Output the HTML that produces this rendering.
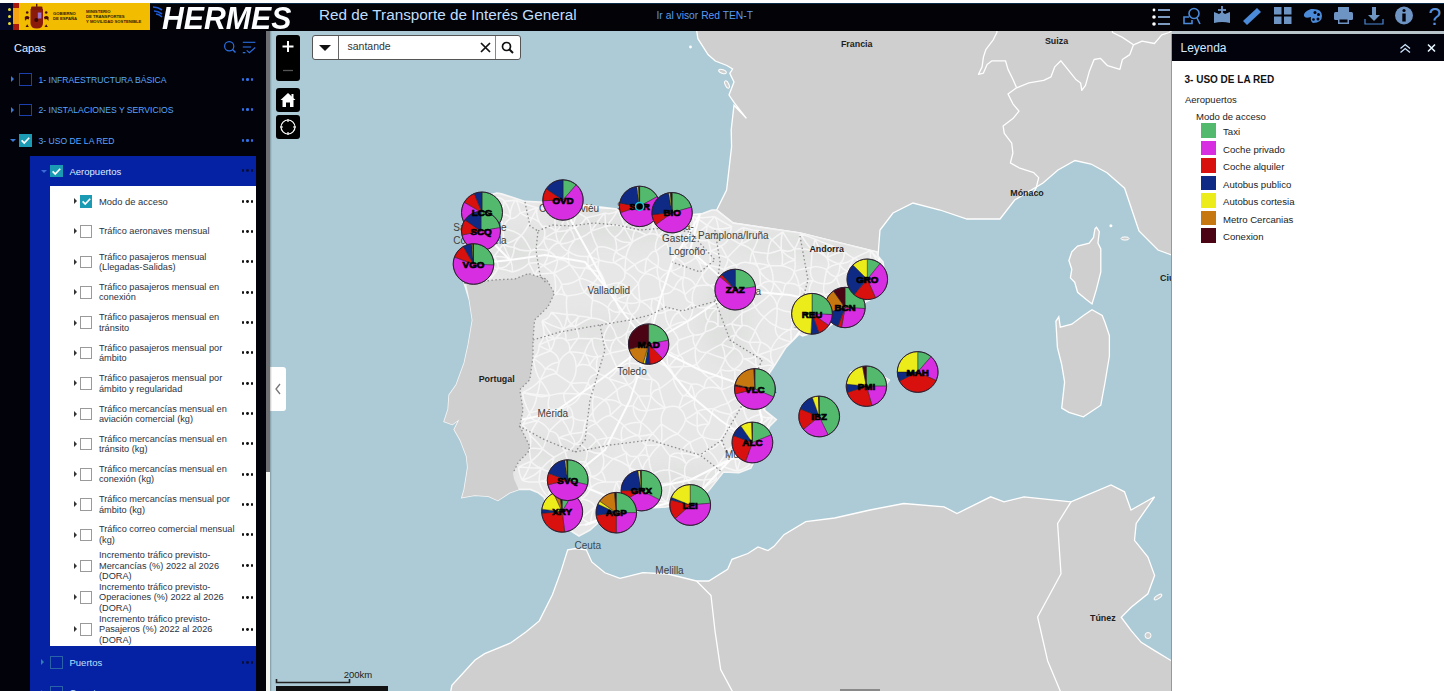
<!DOCTYPE html>
<html><head><meta charset="utf-8">
<style>
*{margin:0;padding:0;box-sizing:border-box}
html,body{width:1444px;height:691px;overflow:hidden;background:#fff;font-family:"Liberation Sans",sans-serif}
#top{position:absolute;left:0;top:0;width:1444px;height:3px;background:#fdfdfd}
#hdr{position:absolute;left:0;top:3px;width:1444px;height:28px;background:#020207}
#side{position:absolute;left:0;top:31px;width:266px;height:660px;background:#02030a;overflow:hidden}
#sb{position:absolute;left:266px;top:31px;width:4px;height:660px;background:#f4f4f0}
#sbt{position:absolute;left:266px;top:31px;width:4px;height:441px;background:#6d6f72}
#map{position:absolute;left:270px;top:31px;width:902px;height:660px;overflow:hidden;background:#adcbd6}
#leg{position:absolute;left:1172px;top:34px;width:272px;height:657px;background:#fff;border-left:1px solid #9aa}
.abs{position:absolute}
.t{position:absolute;white-space:nowrap}
</style></head><body>
<div id="top"></div>
<div id="hdr">
 <div class="abs" style="left:0;top:0;width:1444px;height:1px;background:#0b2a48"></div>
 <div class="abs" style="left:0;top:0;width:13px;height:27px;background:#050a2a"></div>
 <div class="abs" style="left:8px;top:5px;width:3px;height:3px;border-radius:50%;background:#e8e030"></div>
 <div class="abs" style="left:8px;top:12px;width:3px;height:3px;border-radius:50%;background:#e8e030"></div>
 <div class="abs" style="left:8px;top:19px;width:3px;height:3px;border-radius:50%;background:#e8e030"></div>
 <div class="abs" style="left:13px;top:0;width:137px;height:27px;background:#f2bd00"></div>
 <div class="abs" style="left:13px;top:0;width:6px;height:4.5px;background:#a8180c"></div>
 <div class="abs" style="left:13px;top:21px;width:6px;height:6px;background:#a8180c"></div>
 <div class="abs" style="left:13px;top:4.5px;width:6px;height:16.5px;background:#f4a412"></div>
 <svg class="abs" style="left:0;top:-3px" width="150" height="34" viewBox="0 0 150 34">
  <path d="M30.5 9 L43 9 L43 23 Q43 28.5 36.7 28.5 Q30.5 28.5 30.5 23 Z" fill="#8a1a0a"/>
  <rect x="31" y="6.5" width="11.5" height="3.5" rx="1.2" fill="#7a1608"/>
  <rect x="36" y="3.8" width="1.4" height="3" fill="#5a1005"/>
  <rect x="37.8" y="12.5" width="3.6" height="6" fill="#9c72c4"/>
  <circle cx="36.3" cy="20" r="2" fill="#3a0800"/>
  <g fill="#4a0c04">
   <circle cx="27.2" cy="12.5" r="1.3"/><circle cx="46.2" cy="12.5" r="1.3"/>
   <path d="M24.8 17 Q27 15 29.5 17.2 L28.6 19.5 Q26.5 18 25 21 Z"/>
   <path d="M48.6 17 Q46.4 15 43.9 17.2 L44.8 19.5 Q46.9 18 48.4 21 Z"/>
   <path d="M25.6 27 L27.2 24.3 L28.8 27 Z"/><path d="M44.6 27 L46.2 24.3 L47.8 27 Z"/>
  </g>
 </svg>
 <div class="t" style="left:53px;top:8px;font-size:4.2px;line-height:5px;color:#2e1800;font-weight:bold">GOBIERNO<br>DE ESPAÑA</div>
 <div class="t" style="left:86px;top:6px;font-size:4.2px;line-height:5px;color:#2e1800;font-weight:bold">MINISTERIO<br>DE TRANSPORTES<br>Y MOVILIDAD SOSTENIBLE</div>
 <svg class="abs" style="left:152px;top:1px" width="12" height="14" viewBox="0 0 12 14">
  <path d="M1 3 Q6 3 10 6 M2 7 Q6 7 10 10 M4 10 Q7 10 10 13" stroke="#1d5bd6" stroke-width="1.6" fill="none"/>
 </svg>
 <div class="t" style="left:162px;top:-1.8px;font-size:31px;line-height:36px;font-weight:bold;font-style:italic;color:#fbfdff;transform:scaleX(0.975);transform-origin:0 0">HERMES</div>
 <div class="t" style="left:319px;top:3.3px;font-size:15.3px;color:#c0deff">Red de Transporte de Interés General</div>
 <div class="t" style="left:656.5px;top:6.8px;font-size:10.3px;line-height:12px;color:#5a9cf0">Ir al visor Red TEN-T</div>
 <!-- icons -->
 <svg class="abs" style="left:1150px;top:3px" width="294" height="22" viewBox="1150 6 294 22">
  <g fill="#fff"><circle cx="1154" cy="10" r="1.4"/><circle cx="1154" cy="17" r="1.8"/><circle cx="1154" cy="24" r="1.8"/></g>
  <g stroke="#9ec4f0" stroke-width="1.6"><line x1="1158" y1="10" x2="1170" y2="10"/><line x1="1158" y1="17" x2="1170" y2="17"/><line x1="1158" y1="24" x2="1170" y2="24"/></g>
  <g stroke="#4a8ad8" stroke-width="1.6" fill="none"><circle cx="1194" cy="13.5" r="5"/><line x1="1197" y1="18" x2="1200" y2="24"/><path d="M1189 17 L1184 17 L1184 23.5 L1192 23.5 L1192 20"/></g>
  <path d="M1214 12 L1219 14 L1222 12 L1225 14 L1230 12 L1230 23 Q1222 21 1214 23 Z" fill="#6e94c4"/>
  <g stroke="#6e94c4" stroke-width="1.8"><line x1="1222" y1="6" x2="1222" y2="14"/><line x1="1218" y1="10" x2="1226" y2="10"/></g>
  <path d="M1243 21 L1257 8 L1261 12 L1247 25 Z" fill="#4a8ad8"/>
  <g fill="#6e94c4"><rect x="1274" y="7" width="7.5" height="7.5"/><rect x="1284" y="7" width="7.5" height="7.5"/><rect x="1274" y="16.5" width="7.5" height="7.5"/><rect x="1284" y="16.5" width="7.5" height="7.5"/></g>
  <path d="M1311 9 Q1322 8 1322 16 Q1322 23 1313 23 Q1310 21 1311 17 Q1305 19 1304 16 Q1303 12 1311 9 Z" fill="#4a8ad8"/>
  <g fill="#01020b"><circle cx="1315" cy="12.5" r="1.5"/><circle cx="1318.5" cy="14.5" r="1.5"/><circle cx="1318" cy="19" r="1.5"/><circle cx="1313.5" cy="19.5" r="1.3"/></g>
  <g fill="#6e94c4"><rect x="1338" y="7" width="11" height="5"/><rect x="1334" y="12" width="19" height="8" rx="1.5"/><rect x="1338" y="18" width="11" height="6"/></g>
  <rect x="1339.5" y="19.5" width="8" height="3" fill="#01020b"/>
  <g fill="#6e94c4"><rect x="1372" y="7" width="4" height="9"/><path d="M1368 15 L1380 15 L1374 21 Z"/></g>
  <path d="M1365 19 L1365 24 L1383 24 L1383 19" stroke="#4a8ad8" stroke-width="1.2" fill="none"/>
  <circle cx="1404" cy="15.5" r="9" fill="#6e94c4"/>
  <g fill="#01020b"><circle cx="1404" cy="10.5" r="1.6"/><rect x="1402.3" y="13.5" width="3.4" height="8"/></g>
  <text x="1428.5" y="24.5" font-family="Liberation Sans" font-size="23" fill="#5a90d8">?</text>
 </svg>
</div>
<div id="side">
<div class="t" style="left:14px;top:10.79px;font-size:11px;line-height:13.2px;color:#e8f0ff;">Capas</div>
<svg class="abs" style="left:210px;top:4px" width="50" height="25" viewBox="210 35 50 25"><circle cx="229.2" cy="46.3" r="4.6" stroke="#2a6ee0" stroke-width="1.2" fill="none"/><line x1="232.5" y1="49.6" x2="235.5" y2="52.6" stroke="#2a6ee0" stroke-width="1.4"/><g stroke="#2a6ee0" stroke-width="1.1" fill="none"><line x1="242.8" y1="42.3" x2="255.4" y2="42.3"/><line x1="242.8" y1="47" x2="251" y2="47"/><line x1="242.8" y1="52.7" x2="245.4" y2="52.7" stroke="#3a8af0"/><path d="M246.7 50.4 L249.4 52.7 L255.2 47.5"/></g></svg>
<div class="abs" style="left:11px;top:45.30px;width:0;height:0;border-top:3px solid transparent;border-bottom:3px solid transparent;border-left:3px solid #3a7bd5"></div>
<div class="abs" style="left:19px;top:42.20px;width:12.5px;height:12.5px;border:1px solid #1c3fb0"></div>
<div class="t" style="left:38.5px;top:43.96px;font-size:8.6px;line-height:10.32px;color:#58a6ff;">1- INFRAESTRUCTURA BÁSICA</div>
<div class="abs" style="left:241.5px;top:46.95px;width:2.7px;height:2.7px;border-radius:50%;background:#2f6fe8"></div><div class="abs" style="left:246.0px;top:46.95px;width:2.7px;height:2.7px;border-radius:50%;background:#2f6fe8"></div><div class="abs" style="left:250.5px;top:46.95px;width:2.7px;height:2.7px;border-radius:50%;background:#2f6fe8"></div>
<div class="abs" style="left:11px;top:75.80px;width:0;height:0;border-top:3px solid transparent;border-bottom:3px solid transparent;border-left:3px solid #3a7bd5"></div>
<div class="abs" style="left:19px;top:72.70px;width:12.5px;height:12.5px;border:1px solid #1c3fb0"></div>
<div class="t" style="left:38.5px;top:74.46px;font-size:8.6px;line-height:10.32px;color:#58a6ff;">2- INSTALACIONES Y SERVICIOS</div>
<div class="abs" style="left:241.5px;top:77.45px;width:2.7px;height:2.7px;border-radius:50%;background:#2f6fe8"></div><div class="abs" style="left:246.0px;top:77.45px;width:2.7px;height:2.7px;border-radius:50%;background:#2f6fe8"></div><div class="abs" style="left:250.5px;top:77.45px;width:2.7px;height:2.7px;border-radius:50%;background:#2f6fe8"></div>
<div class="abs" style="left:10px;top:108.20px;width:0;height:0;border-left:3px solid transparent;border-right:3px solid transparent;border-top:3px solid #3a7bd5"></div>
<div class="abs" style="left:19px;top:103.10px;width:12.5px;height:12.5px;background:#1a9bb3"></div><svg class="abs" style="left:19px;top:103.10px" width="12.5" height="12.5" viewBox="0 0 12 12"><path d="M2.5 6.2 L5 8.6 L9.8 3.6" stroke="#fff" stroke-width="1.6" fill="none"/></svg>
<div class="t" style="left:38.5px;top:104.66px;font-size:8.6px;line-height:10.32px;color:#58a6ff;">3- USO DE LA RED</div>
<div class="abs" style="left:241.5px;top:107.85px;width:2.7px;height:2.7px;border-radius:50%;background:#2f6fe8"></div><div class="abs" style="left:246.0px;top:107.85px;width:2.7px;height:2.7px;border-radius:50%;background:#2f6fe8"></div><div class="abs" style="left:250.5px;top:107.85px;width:2.7px;height:2.7px;border-radius:50%;background:#2f6fe8"></div>
<div class="abs" style="left:30px;top:125px;width:226px;height:535px;background:#0522a4"></div>
<div class="abs" style="left:41px;top:138.60px;width:0;height:0;border-left:3px solid transparent;border-right:3px solid transparent;border-top:3px solid #3a6ad5"></div>
<div class="abs" style="left:50px;top:133.50px;width:12.5px;height:12.5px;background:#1a9bb3"></div><svg class="abs" style="left:50px;top:133.50px" width="12.5" height="12.5" viewBox="0 0 12 12"><path d="M2.5 6.2 L5 8.6 L9.8 3.6" stroke="#fff" stroke-width="1.6" fill="none"/></svg>
<div class="t" style="left:69.5px;top:135.01px;font-size:9.5px;line-height:11.4px;color:#dfeeff;">Aeropuertos</div>
<div class="abs" style="left:241.5px;top:138.15px;width:2.9px;height:2.9px;border-radius:50%;background:#0a0f3a"></div><div class="abs" style="left:246.0px;top:138.15px;width:2.9px;height:2.9px;border-radius:50%;background:#0a0f3a"></div><div class="abs" style="left:250.5px;top:138.15px;width:2.9px;height:2.9px;border-radius:50%;background:#0a0f3a"></div>
<div class="abs" style="left:50px;top:155px;width:206px;height:460.4px;background:#fff"></div>
<div class="abs" style="left:74px;top:167.10px;width:0;height:0;border-top:3px solid transparent;border-bottom:3px solid transparent;border-left:3px solid #333"></div>
<div class="abs" style="left:79.5px;top:164.00px;width:12.5px;height:12.5px;background:#1a9bb3"></div><svg class="abs" style="left:79.5px;top:164.00px" width="12.5" height="12.5" viewBox="0 0 12 12"><path d="M2.5 6.2 L5 8.6 L9.8 3.6" stroke="#fff" stroke-width="1.6" fill="none"/></svg>
<div class="t" style="left:99px;top:165.00px;font-size:9.4px;line-height:11.28px;color:#2a3242;">Modo de acceso</div>
<div class="abs" style="left:241.5px;top:168.65px;width:2.9px;height:2.9px;border-radius:50%;background:#111"></div><div class="abs" style="left:246.0px;top:168.65px;width:2.9px;height:2.9px;border-radius:50%;background:#111"></div><div class="abs" style="left:250.5px;top:168.65px;width:2.9px;height:2.9px;border-radius:50%;background:#111"></div>
<div class="abs" style="left:74px;top:197.40px;width:0;height:0;border-top:3px solid transparent;border-bottom:3px solid transparent;border-left:3px solid #333"></div>
<div class="abs" style="left:79.5px;top:194.30px;width:12.5px;height:12.5px;border:1px solid #9a9a9a"></div>
<div class="t" style="left:99px;top:195.49px;font-size:9.2px;line-height:11.04px;color:#2a3242;">Tráfico aeronaves mensual</div>
<div class="abs" style="left:241.5px;top:198.95px;width:2.9px;height:2.9px;border-radius:50%;background:#111"></div><div class="abs" style="left:246.0px;top:198.95px;width:2.9px;height:2.9px;border-radius:50%;background:#111"></div><div class="abs" style="left:250.5px;top:198.95px;width:2.9px;height:2.9px;border-radius:50%;background:#111"></div>
<div class="abs" style="left:74px;top:227.80px;width:0;height:0;border-top:3px solid transparent;border-bottom:3px solid transparent;border-left:3px solid #333"></div>
<div class="abs" style="left:79.5px;top:224.70px;width:12.5px;height:12.5px;border:1px solid #9a9a9a"></div>
<div class="t" style="left:99px;top:220.69px;font-size:9.2px;line-height:11.04px;color:#2a3242;">Tráfico pasajeros mensual</div>
<div class="t" style="left:99px;top:231.09px;font-size:9.2px;line-height:11.04px;color:#2a3242;">(Llegadas-Salidas)</div>
<div class="abs" style="left:241.5px;top:229.35px;width:2.9px;height:2.9px;border-radius:50%;background:#111"></div><div class="abs" style="left:246.0px;top:229.35px;width:2.9px;height:2.9px;border-radius:50%;background:#111"></div><div class="abs" style="left:250.5px;top:229.35px;width:2.9px;height:2.9px;border-radius:50%;background:#111"></div>
<div class="abs" style="left:74px;top:258.20px;width:0;height:0;border-top:3px solid transparent;border-bottom:3px solid transparent;border-left:3px solid #333"></div>
<div class="abs" style="left:79.5px;top:255.10px;width:12.5px;height:12.5px;border:1px solid #9a9a9a"></div>
<div class="t" style="left:99px;top:251.09px;font-size:9.2px;line-height:11.04px;color:#2a3242;">Tráfico pasajeros mensual en</div>
<div class="t" style="left:99px;top:261.49px;font-size:9.2px;line-height:11.04px;color:#2a3242;">conexión</div>
<div class="abs" style="left:241.5px;top:259.75px;width:2.9px;height:2.9px;border-radius:50%;background:#111"></div><div class="abs" style="left:246.0px;top:259.75px;width:2.9px;height:2.9px;border-radius:50%;background:#111"></div><div class="abs" style="left:250.5px;top:259.75px;width:2.9px;height:2.9px;border-radius:50%;background:#111"></div>
<div class="abs" style="left:74px;top:288.50px;width:0;height:0;border-top:3px solid transparent;border-bottom:3px solid transparent;border-left:3px solid #333"></div>
<div class="abs" style="left:79.5px;top:285.40px;width:12.5px;height:12.5px;border:1px solid #9a9a9a"></div>
<div class="t" style="left:99px;top:281.39px;font-size:9.2px;line-height:11.04px;color:#2a3242;">Tráfico pasajeros mensual en</div>
<div class="t" style="left:99px;top:291.79px;font-size:9.2px;line-height:11.04px;color:#2a3242;">tránsito</div>
<div class="abs" style="left:241.5px;top:290.05px;width:2.9px;height:2.9px;border-radius:50%;background:#111"></div><div class="abs" style="left:246.0px;top:290.05px;width:2.9px;height:2.9px;border-radius:50%;background:#111"></div><div class="abs" style="left:250.5px;top:290.05px;width:2.9px;height:2.9px;border-radius:50%;background:#111"></div>
<div class="abs" style="left:74px;top:318.90px;width:0;height:0;border-top:3px solid transparent;border-bottom:3px solid transparent;border-left:3px solid #333"></div>
<div class="abs" style="left:79.5px;top:315.80px;width:12.5px;height:12.5px;border:1px solid #9a9a9a"></div>
<div class="t" style="left:99px;top:311.79px;font-size:9.2px;line-height:11.04px;color:#2a3242;">Tráfico pasajeros mensual por</div>
<div class="t" style="left:99px;top:322.19px;font-size:9.2px;line-height:11.04px;color:#2a3242;">ámbito</div>
<div class="abs" style="left:241.5px;top:320.45px;width:2.9px;height:2.9px;border-radius:50%;background:#111"></div><div class="abs" style="left:246.0px;top:320.45px;width:2.9px;height:2.9px;border-radius:50%;background:#111"></div><div class="abs" style="left:250.5px;top:320.45px;width:2.9px;height:2.9px;border-radius:50%;background:#111"></div>
<div class="abs" style="left:74px;top:349.30px;width:0;height:0;border-top:3px solid transparent;border-bottom:3px solid transparent;border-left:3px solid #333"></div>
<div class="abs" style="left:79.5px;top:346.20px;width:12.5px;height:12.5px;border:1px solid #9a9a9a"></div>
<div class="t" style="left:99px;top:342.19px;font-size:9.2px;line-height:11.04px;color:#2a3242;">Tráfico pasajeros mensual por</div>
<div class="t" style="left:99px;top:352.59px;font-size:9.2px;line-height:11.04px;color:#2a3242;">ámbito y regularidad</div>
<div class="abs" style="left:241.5px;top:350.85px;width:2.9px;height:2.9px;border-radius:50%;background:#111"></div><div class="abs" style="left:246.0px;top:350.85px;width:2.9px;height:2.9px;border-radius:50%;background:#111"></div><div class="abs" style="left:250.5px;top:350.85px;width:2.9px;height:2.9px;border-radius:50%;background:#111"></div>
<div class="abs" style="left:74px;top:379.70px;width:0;height:0;border-top:3px solid transparent;border-bottom:3px solid transparent;border-left:3px solid #333"></div>
<div class="abs" style="left:79.5px;top:376.60px;width:12.5px;height:12.5px;border:1px solid #9a9a9a"></div>
<div class="t" style="left:99px;top:372.59px;font-size:9.2px;line-height:11.04px;color:#2a3242;">Tráfico mercancías mensual en</div>
<div class="t" style="left:99px;top:382.99px;font-size:9.2px;line-height:11.04px;color:#2a3242;">aviación comercial (kg)</div>
<div class="abs" style="left:241.5px;top:381.25px;width:2.9px;height:2.9px;border-radius:50%;background:#111"></div><div class="abs" style="left:246.0px;top:381.25px;width:2.9px;height:2.9px;border-radius:50%;background:#111"></div><div class="abs" style="left:250.5px;top:381.25px;width:2.9px;height:2.9px;border-radius:50%;background:#111"></div>
<div class="abs" style="left:74px;top:409.90px;width:0;height:0;border-top:3px solid transparent;border-bottom:3px solid transparent;border-left:3px solid #333"></div>
<div class="abs" style="left:79.5px;top:406.80px;width:12.5px;height:12.5px;border:1px solid #9a9a9a"></div>
<div class="t" style="left:99px;top:402.79px;font-size:9.2px;line-height:11.04px;color:#2a3242;">Tráfico mercancías mensual en</div>
<div class="t" style="left:99px;top:413.19px;font-size:9.2px;line-height:11.04px;color:#2a3242;">tránsito (kg)</div>
<div class="abs" style="left:241.5px;top:411.45px;width:2.9px;height:2.9px;border-radius:50%;background:#111"></div><div class="abs" style="left:246.0px;top:411.45px;width:2.9px;height:2.9px;border-radius:50%;background:#111"></div><div class="abs" style="left:250.5px;top:411.45px;width:2.9px;height:2.9px;border-radius:50%;background:#111"></div>
<div class="abs" style="left:74px;top:440.10px;width:0;height:0;border-top:3px solid transparent;border-bottom:3px solid transparent;border-left:3px solid #333"></div>
<div class="abs" style="left:79.5px;top:437.00px;width:12.5px;height:12.5px;border:1px solid #9a9a9a"></div>
<div class="t" style="left:99px;top:432.99px;font-size:9.2px;line-height:11.04px;color:#2a3242;">Tráfico mercancías mensual en</div>
<div class="t" style="left:99px;top:443.39px;font-size:9.2px;line-height:11.04px;color:#2a3242;">conexión (kg)</div>
<div class="abs" style="left:241.5px;top:441.65px;width:2.9px;height:2.9px;border-radius:50%;background:#111"></div><div class="abs" style="left:246.0px;top:441.65px;width:2.9px;height:2.9px;border-radius:50%;background:#111"></div><div class="abs" style="left:250.5px;top:441.65px;width:2.9px;height:2.9px;border-radius:50%;background:#111"></div>
<div class="abs" style="left:74px;top:470.30px;width:0;height:0;border-top:3px solid transparent;border-bottom:3px solid transparent;border-left:3px solid #333"></div>
<div class="abs" style="left:79.5px;top:467.20px;width:12.5px;height:12.5px;border:1px solid #9a9a9a"></div>
<div class="t" style="left:99px;top:463.19px;font-size:9.2px;line-height:11.04px;color:#2a3242;">Tráfico mercancías mensual por</div>
<div class="t" style="left:99px;top:473.59px;font-size:9.2px;line-height:11.04px;color:#2a3242;">ámbito (kg)</div>
<div class="abs" style="left:241.5px;top:471.85px;width:2.9px;height:2.9px;border-radius:50%;background:#111"></div><div class="abs" style="left:246.0px;top:471.85px;width:2.9px;height:2.9px;border-radius:50%;background:#111"></div><div class="abs" style="left:250.5px;top:471.85px;width:2.9px;height:2.9px;border-radius:50%;background:#111"></div>
<div class="abs" style="left:74px;top:500.60px;width:0;height:0;border-top:3px solid transparent;border-bottom:3px solid transparent;border-left:3px solid #333"></div>
<div class="abs" style="left:79.5px;top:497.50px;width:12.5px;height:12.5px;border:1px solid #9a9a9a"></div>
<div class="t" style="left:99px;top:493.49px;font-size:9.2px;line-height:11.04px;color:#2a3242;">Tráfico correo comercial mensual</div>
<div class="t" style="left:99px;top:503.89px;font-size:9.2px;line-height:11.04px;color:#2a3242;">(kg)</div>
<div class="abs" style="left:241.5px;top:502.15px;width:2.9px;height:2.9px;border-radius:50%;background:#111"></div><div class="abs" style="left:246.0px;top:502.15px;width:2.9px;height:2.9px;border-radius:50%;background:#111"></div><div class="abs" style="left:250.5px;top:502.15px;width:2.9px;height:2.9px;border-radius:50%;background:#111"></div>
<div class="abs" style="left:74px;top:531.80px;width:0;height:0;border-top:3px solid transparent;border-bottom:3px solid transparent;border-left:3px solid #333"></div>
<div class="abs" style="left:79.5px;top:528.70px;width:12.5px;height:12.5px;border:1px solid #9a9a9a"></div>
<div class="t" style="left:99px;top:519.49px;font-size:9.2px;line-height:11.04px;color:#2a3242;">Incremento tráfico previsto-</div>
<div class="t" style="left:99px;top:529.89px;font-size:9.2px;line-height:11.04px;color:#2a3242;">Mercancías (%) 2022 al 2026</div>
<div class="t" style="left:99px;top:540.29px;font-size:9.2px;line-height:11.04px;color:#2a3242;">(DORA)</div>
<div class="abs" style="left:241.5px;top:533.35px;width:2.9px;height:2.9px;border-radius:50%;background:#111"></div><div class="abs" style="left:246.0px;top:533.35px;width:2.9px;height:2.9px;border-radius:50%;background:#111"></div><div class="abs" style="left:250.5px;top:533.35px;width:2.9px;height:2.9px;border-radius:50%;background:#111"></div>
<div class="abs" style="left:74px;top:563.30px;width:0;height:0;border-top:3px solid transparent;border-bottom:3px solid transparent;border-left:3px solid #333"></div>
<div class="abs" style="left:79.5px;top:560.20px;width:12.5px;height:12.5px;border:1px solid #9a9a9a"></div>
<div class="t" style="left:99px;top:550.99px;font-size:9.2px;line-height:11.04px;color:#2a3242;">Incremento tráfico previsto-</div>
<div class="t" style="left:99px;top:561.39px;font-size:9.2px;line-height:11.04px;color:#2a3242;">Operaciones (%) 2022 al 2026</div>
<div class="t" style="left:99px;top:571.79px;font-size:9.2px;line-height:11.04px;color:#2a3242;">(DORA)</div>
<div class="abs" style="left:241.5px;top:564.85px;width:2.9px;height:2.9px;border-radius:50%;background:#111"></div><div class="abs" style="left:246.0px;top:564.85px;width:2.9px;height:2.9px;border-radius:50%;background:#111"></div><div class="abs" style="left:250.5px;top:564.85px;width:2.9px;height:2.9px;border-radius:50%;background:#111"></div>
<div class="abs" style="left:74px;top:595.20px;width:0;height:0;border-top:3px solid transparent;border-bottom:3px solid transparent;border-left:3px solid #333"></div>
<div class="abs" style="left:79.5px;top:592.10px;width:12.5px;height:12.5px;border:1px solid #9a9a9a"></div>
<div class="t" style="left:99px;top:582.89px;font-size:9.2px;line-height:11.04px;color:#2a3242;">Incremento tráfico previsto-</div>
<div class="t" style="left:99px;top:593.29px;font-size:9.2px;line-height:11.04px;color:#2a3242;">Pasajeros (%) 2022 al 2026</div>
<div class="t" style="left:99px;top:603.69px;font-size:9.2px;line-height:11.04px;color:#2a3242;">(DORA)</div>
<div class="abs" style="left:241.5px;top:596.75px;width:2.9px;height:2.9px;border-radius:50%;background:#111"></div><div class="abs" style="left:246.0px;top:596.75px;width:2.9px;height:2.9px;border-radius:50%;background:#111"></div><div class="abs" style="left:250.5px;top:596.75px;width:2.9px;height:2.9px;border-radius:50%;background:#111"></div>
<div class="abs" style="left:41px;top:628.10px;width:0;height:0;border-top:3px solid transparent;border-bottom:3px solid transparent;border-left:3px solid #2f7fb0"></div>
<div class="abs" style="left:50px;top:625.00px;width:12.5px;height:12.5px;border:1px solid #2a62a8"></div>
<div class="t" style="left:69.5px;top:625.91px;font-size:9.5px;line-height:11.4px;color:#bfe0ff;">Puertos</div>
<div class="abs" style="left:241.5px;top:629.65px;width:2.9px;height:2.9px;border-radius:50%;background:#0a0f3a"></div><div class="abs" style="left:246.0px;top:629.65px;width:2.9px;height:2.9px;border-radius:50%;background:#0a0f3a"></div><div class="abs" style="left:250.5px;top:629.65px;width:2.9px;height:2.9px;border-radius:50%;background:#0a0f3a"></div>
<div class="abs" style="left:41px;top:658.50px;width:0;height:0;border-top:3px solid transparent;border-bottom:3px solid transparent;border-left:3px solid #2f7fb0"></div>
<div class="abs" style="left:50px;top:655.40px;width:12.5px;height:12.5px;border:1px solid #2a62a8"></div>
<div class="t" style="left:69.5px;top:656.31px;font-size:9.5px;line-height:11.4px;color:#bfe0ff;">Carreteras</div>
<div class="abs" style="left:241.5px;top:660.05px;width:2.9px;height:2.9px;border-radius:50%;background:#0a0f3a"></div><div class="abs" style="left:246.0px;top:660.05px;width:2.9px;height:2.9px;border-radius:50%;background:#0a0f3a"></div><div class="abs" style="left:250.5px;top:660.05px;width:2.9px;height:2.9px;border-radius:50%;background:#0a0f3a"></div>
</div><div id="sb"></div><div id="sbt"></div><div id="map"><svg width="902" height="660" viewBox="270 31 902 660" style="position:absolute;left:0;top:0"><rect x="270" y="31" width="902" height="660" fill="#adcbd6"/><polygon points="695.0,20.0 697.9,38.7 708.0,54.6 715.3,61.0 726.9,65.5 732.6,69.0 729.8,73.4 734.0,82.0 729.0,95.0 734.0,102.4 746.4,118.3 734.0,105.3 731.2,130.0 731.6,146.6 726.6,190.0 716.7,210.0 733.0,223.0 800.0,233.0 840.0,243.0 877.0,252.0 878.0,256.0 880.0,230.0 893.0,213.0 913.0,203.0 940.0,210.0 967.0,219.0 1000.0,219.0 1014.7,200.0 1043.0,183.0 1058.0,170.0 1075.0,160.5 1091.0,164.0 1107.0,172.7 1124.6,188.2 1139.0,231.0 1158.0,250.0 1180.0,258.0 1180.0,20.0" fill="#cfcfcf" stroke="#fff" stroke-width="1.3"/><polygon points="446.0,700.0 450.8,691.0 451.9,685.4 474.8,660.2 484.7,653.7 510.9,642.8 526.2,631.8 539.3,620.9 552.4,594.7 561.2,570.6 567.7,549.8 576.0,548.5 586.3,549.8 591.8,561.9 604.9,572.8 620.0,578.3 643.0,572.6 668.0,574.0 696.5,581.0 708.8,581.0 727.6,569.4 732.0,559.3 747.9,553.5 758.0,547.0 768.0,550.6 774.0,546.3 784.0,534.7 805.8,521.7 834.7,518.0 870.0,510.0 903.8,503.5 944.0,506.8 957.0,513.5 990.7,496.8 1004.0,501.8 1024.0,496.8 1071.0,501.8 1111.0,485.0 1124.5,491.8 1131.0,510.0 1154.6,496.8 1136.2,523.5 1134.5,540.3 1147.9,557.0 1154.6,575.4 1147.9,593.8 1131.2,607.2 1121.2,617.2 1131.2,630.6 1141.2,642.3 1154.6,650.6 1171.3,660.7 1180.0,663.0 1180.0,700.0" fill="#cfcfcf" stroke="#fff" stroke-width="1.3"/><polygon points="1096.4,227.2 1099.3,231.6 1097.9,243.1 1100.8,248.9 1100.8,272.0 1096.4,289.4 1092.0,303.9 1086.3,299.6 1077.6,292.3 1074.7,282.2 1070.4,277.9 1071.8,269.2 1068.9,260.5 1071.8,251.8 1077.6,246.0 1089.2,243.1 1093.5,237.4 1095.0,228.7" fill="#cfcfcf" stroke="#fff" stroke-width="1.3"/><polygon points="1092.0,309.7 1102.2,315.5 1105.1,322.7 1109.4,335.7 1109.4,356.0 1105.1,382.0 1100.8,405.2 1083.4,416.8 1068.9,412.4 1061.7,408.1 1064.6,382.0 1061.7,364.7 1057.4,347.3 1055.9,321.3 1058.8,316.9 1060.3,327.1 1071.8,324.2 1083.4,315.5" fill="#cfcfcf" stroke="#fff" stroke-width="1.3"/><polygon points="716.7,210.0 711.9,210.0 702.6,213.6 691.0,214.7 660.0,210.0 640.0,208.0 617.0,209.0 588.0,205.5 540.0,202.0 525.0,201.4 501.6,193.9 497.0,193.0 485.0,196.0 475.0,202.0 468.0,214.0 465.0,230.0 465.0,250.0 464.0,270.0 464.3,283.4 469.4,300.0 472.5,320.2 468.4,344.5 464.4,362.7 456.3,385.0 449.2,395.0 448.2,409.2 444.2,421.4 452.3,424.4 459.3,419.4 454.3,429.5 460.3,440.0 466.6,456.2 467.8,467.4 464.3,489.4 462.0,497.5 474.7,495.2 488.6,496.3 497.9,500.4 509.5,492.8 518.7,489.4 530.3,489.4 538.4,492.8 544.2,497.5 547.0,507.0 560.0,524.0 579.0,536.0 590.0,530.0 598.0,523.0 620.0,515.0 649.0,508.0 666.0,507.0 697.0,502.0 709.5,489.5 723.4,472.0 739.0,472.8 750.8,468.0 761.6,446.0 769.4,426.5 776.3,419.5 764.7,410.3 764.0,395.0 769.4,373.0 774.0,366.3 785.6,347.8 799.4,334.0 802.6,336.0 825.0,329.0 863.4,303.0 877.3,296.0 886.0,283.0 883.0,262.0 878.0,256.0 877.0,252.0 840.0,243.0 800.0,233.0 733.0,223.0" fill="#e6e7e6" stroke="#f6f6f6" stroke-width="1.6"/><polygon points="850.0,372.0 870.0,368.0 890.0,380.0 875.0,398.0 852.0,395.0" fill="#e6e7e6" stroke="#f6f6f6" stroke-width="1"/><polygon points="905.0,368.0 930.0,364.0 932.0,376.0 905.0,378.0" fill="#e6e7e6" stroke="#f6f6f6" stroke-width="1"/><polygon points="810.0,410.0 826.0,405.0 828.0,425.0 812.0,428.0" fill="#e6e7e6" stroke="#f6f6f6" stroke-width="1"/><clipPath id="spc"><polygon points="716.7,210.0 711.9,210.0 702.6,213.6 691.0,214.7 660.0,210.0 640.0,208.0 617.0,209.0 588.0,205.5 540.0,202.0 525.0,201.4 501.6,193.9 497.0,193.0 485.0,196.0 475.0,202.0 468.0,214.0 465.0,230.0 465.0,250.0 464.0,270.0 464.3,283.4 469.4,300.0 472.5,320.2 468.4,344.5 464.4,362.7 456.3,385.0 449.2,395.0 448.2,409.2 444.2,421.4 452.3,424.4 459.3,419.4 454.3,429.5 460.3,440.0 466.6,456.2 467.8,467.4 464.3,489.4 462.0,497.5 474.7,495.2 488.6,496.3 497.9,500.4 509.5,492.8 518.7,489.4 530.3,489.4 538.4,492.8 544.2,497.5 547.0,507.0 560.0,524.0 579.0,536.0 590.0,530.0 598.0,523.0 620.0,515.0 649.0,508.0 666.0,507.0 697.0,502.0 709.5,489.5 723.4,472.0 739.0,472.8 750.8,468.0 761.6,446.0 769.4,426.5 776.3,419.5 764.7,410.3 764.0,395.0 769.4,373.0 774.0,366.3 785.6,347.8 799.4,334.0 802.6,336.0 825.0,329.0 863.4,303.0 877.3,296.0 886.0,283.0 883.0,262.0 878.0,256.0 877.0,252.0 840.0,243.0 800.0,233.0 733.0,223.0"/></clipPath><filter id="bl" x="-5%" y="-5%" width="110%" height="110%"><feGaussianBlur stdDeviation="0.55"/></filter><filter id="bl2" x="-50%" y="-50%" width="200%" height="200%"><feGaussianBlur stdDeviation="9"/></filter><g clip-path="url(#spc)"><g filter="url(#bl2)" fill="#d9dbd9" opacity="0.55"><ellipse cx="610" cy="228" rx="70" ry="14"/><ellipse cx="800" cy="245" rx="70" ry="10"/><ellipse cx="725" cy="320" rx="22" ry="40"/><ellipse cx="600" cy="330" rx="45" ry="9"/><ellipse cx="560" cy="450" rx="45" ry="10"/><ellipse cx="680" cy="480" rx="40" ry="12"/><ellipse cx="515" cy="250" rx="25" ry="20"/></g></g><g clip-path="url(#spc)"><g filter="url(#bl)"><path d="M640.4,480.3 Q648.8,473.9 653.2,474.2 M601.3,471.3 Q607.4,464.4 613.1,458.8 M576.9,211.7 Q580.6,214.6 586.2,217.7 M581.4,517.8 Q587.0,513.8 595.2,506.6 M586.6,450.0 Q581.8,443.3 574.4,444.6 M578.9,316.3 Q576.5,319.9 575.2,326.7 M542.0,320.7 Q544.3,330.1 544.0,334.3 M568.2,405.8 Q576.7,403.3 580.7,394.5 M561.6,284.1 Q561.2,290.1 553.9,295.3 M720.3,439.2 Q720.3,446.1 727.9,449.8 M720.3,369.4 Q730.4,372.7 734.4,369.4 M710.4,265.4 Q709.9,255.2 710.5,250.9 M705.3,331.9 Q700.3,336.6 695.5,347.0 M534.9,275.0 Q537.6,267.7 543.6,265.5 M585.3,267.8 Q589.2,265.9 587.6,256.5 M578.9,316.3 Q573.7,323.6 563.2,329.5 M814.3,317.4 Q827.8,320.4 835.2,316.9 M832.1,303.2 Q841.0,304.0 851.1,306.7 M670.4,482.9 Q676.2,477.2 685.3,476.5 M624.9,272.1 Q622.3,266.2 614.6,263.0 M734.3,299.8 Q728.0,300.7 723.2,295.8 M777.1,307.8 Q777.5,313.5 775.9,325.7 M758.6,230.5 Q765.3,233.1 771.9,239.7 M614.8,237.4 Q621.6,232.8 623.9,227.1 M685.3,476.5 Q694.5,480.3 704.4,479.9 M531.0,461.3 Q540.0,454.5 542.5,448.9 M640.9,422.3 Q641.4,426.3 638.7,435.9 M610.1,415.4 Q610.8,404.4 604.3,400.2 M678.7,340.3 Q687.6,336.8 694.1,335.1 M880.1,260.4 Q872.1,252.5 870.4,250.6 M647.1,258.2 Q645.2,263.1 645.0,273.7 M620.2,311.7 Q614.3,313.6 608.1,307.7 M757.2,355.1 Q752.2,359.7 742.9,358.4 M593.0,283.0 Q588.4,285.1 584.5,292.4 M629.9,348.8 Q619.6,343.7 616.6,337.6 M659.4,388.9 Q661.7,399.7 665.4,407.7 M637.7,456.2 Q638.8,460.9 642.8,469.1 M764.1,317.1 Q771.1,324.7 775.9,325.7 M718.1,308.1 Q717.7,319.2 718.1,325.9 M626.2,495.6 Q617.8,488.8 616.9,481.8 M558.3,504.7 Q563.2,506.6 562.2,516.1 M658.2,235.9 Q665.0,230.7 667.5,226.5 M826.7,269.5 Q828.1,274.4 836.2,277.1 M562.2,490.5 Q559.4,493.1 549.0,497.8 M638.5,283.8 Q638.8,279.0 645.0,273.7 M549.6,395.6 Q546.3,406.5 550.1,409.8 M665.2,213.4 Q672.3,213.4 677.4,213.7 M710.4,285.6 Q699.7,284.9 695.9,286.3 M579.8,278.6 Q582.4,277.9 593.0,283.0 M692.8,216.7 Q699.8,219.4 707.2,225.3 M826.9,257.9 Q828.6,253.0 830.6,245.2 M640.9,422.3 Q633.4,417.6 633.1,405.8 M610.4,353.1 Q605.1,355.3 597.9,356.7 M705.8,307.6 Q710.8,305.3 723.2,295.8 M735.1,458.9 Q725.9,459.6 718.6,464.5 M570.1,433.9 Q567.6,426.3 561.9,419.1 M620.2,311.7 Q615.8,302.4 616.2,299.4 M781.4,249.8 Q779.7,247.2 771.9,239.7 M565.1,451.1 Q573.5,449.3 574.4,444.6 M683.9,277.3 Q677.1,277.4 671.3,270.9 M811.1,267.8 Q808.8,273.8 813.3,280.5 M578.3,338.3 Q588.2,338.8 592.3,338.7 M605.6,286.3 Q601.7,286.9 593.0,283.0 M647.1,410.5 Q638.5,411.8 633.1,405.8 M725.2,358.8 Q726.0,355.6 734.4,348.1 M843.2,295.0 Q849.6,292.9 863.9,296.9 M770.0,265.8 Q756.3,262.1 750.1,263.3 M836.2,277.1 Q842.5,273.5 847.9,271.3 M869.8,266.6 Q870.7,261.8 870.4,250.6 M683.9,277.3 Q677.7,279.5 674.1,288.7 M790.7,329.1 Q793.7,324.3 790.2,311.8 M702.5,436.6 Q715.1,441.2 720.3,439.2 M757.2,355.1 Q765.8,356.9 773.8,365.1 M572.6,508.5 Q570.8,515.9 562.2,516.1 M677.7,434.0 Q668.3,436.4 661.1,443.9 M709.0,424.0 Q699.7,424.4 697.5,426.4 M670.4,482.9 Q660.0,483.6 654.0,486.7 M843.2,295.0 Q845.9,303.3 851.1,306.7 M638.5,283.8 Q638.6,289.9 640.0,301.4 M727.6,281.3 Q726.6,275.3 724.0,269.7 M778.6,337.4 Q773.9,331.3 775.9,325.7 M687.7,321.2 Q677.2,322.1 669.9,327.0 M687.7,321.2 Q693.4,316.2 692.7,303.3 M521.3,235.6 Q526.5,229.9 531.8,217.9 M677.9,233.1 Q672.0,232.7 667.5,226.5 M490.8,278.0 Q479.9,274.8 468.9,274.6 M678.7,340.3 Q672.3,349.1 668.8,351.4 M571.9,526.8 Q570.0,524.9 562.2,516.1 M586.6,450.0 Q594.9,443.1 596.4,440.4 M603.7,340.1 Q603.1,333.7 610.0,324.3 M534.9,275.0 Q545.0,272.8 553.7,273.3 M539.1,481.9 Q542.0,491.7 549.0,497.8 M586.6,450.0 Q588.3,452.9 585.6,461.4 M686.4,463.8 Q682.5,457.3 681.3,453.7 M824.8,294.9 Q822.7,291.4 824.1,283.7 M726.1,429.8 Q728.3,427.7 738.2,428.3 M563.2,329.5 Q559.5,317.5 551.0,312.5 M644.4,495.8 Q648.6,495.0 654.0,486.7 M576.4,486.5 Q573.1,490.1 562.2,490.5 M568.6,251.3 Q565.3,256.4 557.5,259.5 M750.1,263.3 Q742.8,260.5 736.9,265.2 M548.7,251.0 Q554.0,243.1 559.5,243.1 M736.9,265.2 Q734.6,273.3 738.8,281.3 M568.2,405.8 Q568.2,411.6 561.9,419.1 M591.6,318.0 Q600.9,318.2 610.0,324.3 M483.1,239.8 Q478.9,237.3 472.8,228.3 M791.2,342.0 Q802.5,334.7 806.0,334.7 M659.1,336.8 Q661.9,343.9 668.8,351.4 M588.0,383.1 Q584.1,392.1 580.7,394.5 M781.4,249.8 Q783.4,258.5 781.9,265.7 M764.1,317.1 Q757.1,325.3 755.2,330.8 M542.0,320.7 Q552.6,326.6 563.2,329.5 M672.5,256.4 Q668.2,249.0 666.6,243.1 M597.6,247.0 Q594.4,241.5 591.0,231.3 M674.1,288.7 Q679.7,289.3 685.0,294.5 M610.4,353.1 Q613.9,361.6 617.6,369.0 M629.3,363.1 Q629.0,370.1 635.9,375.8 M652.9,312.0 Q652.5,321.2 651.2,328.1 M632.0,314.9 Q637.7,321.6 640.6,324.2 M610.4,353.1 Q610.1,343.9 616.6,337.6 M662.9,293.8 Q659.4,288.0 659.6,280.1 M771.2,350.5 Q769.1,345.2 760.7,342.0 M727.8,403.1 Q736.2,396.4 740.2,397.5 M554.9,338.9 Q547.5,336.9 544.0,334.3 M529.6,434.9 Q539.2,443.8 542.5,448.9 M553.0,471.5 Q549.2,480.4 539.1,481.9 M773.1,282.0 Q764.4,279.7 759.4,270.3 M570.1,433.9 Q574.0,433.6 583.3,432.1 M824.8,294.9 Q814.7,290.9 809.3,293.2 M531.0,461.3 Q535.0,466.4 541.8,468.3 M720.3,369.4 Q724.3,361.4 725.2,358.8 M533.2,358.4 Q535.4,373.0 540.0,380.2 M809.3,293.2 Q804.9,292.3 799.0,286.3 M605.3,226.4 Q618.6,223.7 623.9,227.1 M570.5,463.3 Q571.8,470.6 580.3,472.6 M640.4,480.3 Q637.2,480.5 629.0,483.7 M536.8,395.7 Q535.7,405.9 529.6,413.1 M565.1,451.1 Q560.6,446.1 558.7,438.0 M620.2,311.7 Q617.4,318.1 610.0,324.3 M553.7,273.3 Q558.0,276.3 561.6,284.1 M682.9,396.1 Q685.5,394.1 695.0,399.2 M586.2,217.7 Q580.5,227.4 570.2,229.2 M520.3,212.9 Q528.5,218.3 531.8,217.9 M773.8,365.1 Q769.9,366.5 766.6,374.2 M651.2,328.1 Q658.5,332.8 659.1,336.8 M581.4,517.8 Q572.5,518.7 562.2,516.1 M568.6,251.3 Q576.0,257.4 587.6,256.5 M661.5,424.1 Q670.1,429.9 677.7,434.0 M581.4,517.8 Q584.8,521.4 590.7,523.9 M510.7,260.4 Q506.0,255.9 494.0,256.7 M613.1,458.8 Q617.6,457.4 626.7,452.8 M610.4,353.1 Q621.8,350.9 629.9,348.8 M548.7,251.0 Q548.2,258.5 543.6,265.5 M740.6,244.3 Q732.5,239.5 729.1,237.8 M851.1,306.7 Q854.7,305.1 863.9,296.9 M799.0,286.3 Q804.9,281.0 813.3,280.5 M602.6,453.6 Q601.9,445.7 607.4,438.1 M755.5,400.1 Q760.7,408.1 772.8,417.0 M669.9,327.0 Q661.6,331.7 659.1,336.8 M490.8,278.0 Q489.5,265.3 494.0,256.7 M638.7,435.9 Q634.0,434.6 622.0,440.6 M653.2,474.2 Q648.1,474.2 642.8,469.1 M755.5,400.1 Q751.7,401.6 743.8,408.8 M763.3,385.9 Q763.4,380.6 766.6,374.2 M604.5,213.1 Q613.1,215.0 617.9,210.1 M696.9,495.4 Q707.0,484.5 716.4,479.4 M710.4,285.6 Q715.3,284.0 727.6,281.3 M655.9,251.1 Q659.8,256.7 657.8,266.3 M591.1,476.6 Q589.9,471.0 585.6,461.4 M557.7,205.8 Q563.4,206.2 576.9,211.7 M812.3,250.7 Q811.6,257.1 811.1,267.8 M814.3,317.4 Q815.2,314.6 822.4,309.4 M705.8,307.6 Q704.1,315.3 708.1,321.2 M475.7,257.8 Q488.8,253.5 494.0,256.7 M631.4,217.6 Q622.6,210.7 617.9,210.1 M640.4,480.3 Q641.4,476.9 642.8,469.1 M572.8,416.5 Q572.6,409.7 568.2,405.8 M742.4,325.6 Q740.9,319.6 742.3,312.8 M610.1,415.4 Q603.6,416.1 596.4,423.6 M522.1,480.1 Q535.3,476.7 541.8,468.3 M596.4,423.6 Q591.8,424.5 583.3,432.1 M826.7,269.5 Q825.8,273.7 824.1,283.7 M679.5,355.3 Q684.9,358.3 683.5,366.3 M537.8,420.8 Q526.7,422.9 522.1,424.8 M814.9,239.1 Q807.6,236.1 800.4,233.9 M744.9,450.5 Q749.9,457.1 751.2,462.8 M658.0,361.9 Q649.8,366.6 642.7,365.2 M778.6,337.4 Q782.6,339.9 791.2,342.0 M634.9,264.5 Q636.5,271.4 645.0,273.7 M737.5,470.9 Q738.8,461.2 744.9,450.5 M658.2,235.9 Q653.9,232.1 646.3,235.0 M757.3,366.9 Q754.0,361.0 757.2,355.1 M734.6,384.4 Q735.4,374.4 734.4,369.4 M537.1,207.8 Q533.1,216.4 531.8,217.9 M556.4,373.6 Q549.3,374.3 540.0,380.2 M812.3,250.7 Q804.3,247.9 794.6,248.9 M598.5,373.8 Q589.5,374.5 588.0,383.1 M790.2,311.8 Q796.3,310.5 797.6,301.8 M721.0,246.2 Q712.3,245.1 707.8,240.3 M586.2,217.7 Q590.7,221.8 591.0,231.3 M553.7,273.3 Q557.5,287.4 553.9,295.3 M683.9,277.3 Q680.8,283.8 685.0,294.5 M773.1,282.0 Q773.4,273.0 770.0,265.8 M649.9,346.2 Q651.5,337.8 659.1,336.8 M854.4,258.1 Q852.5,258.5 844.2,251.7 M777.1,307.8 Q783.2,311.7 790.2,311.8 M750.2,434.2 Q746.5,441.0 740.0,440.0 M474.4,246.5 Q471.9,237.2 472.8,228.3 M579.8,278.6 Q571.6,284.9 561.6,284.1 M652.9,312.0 Q650.0,320.4 640.6,324.2 M874.9,284.8 Q877.8,271.3 880.1,260.4 M826.7,269.5 Q830.7,265.6 826.9,257.9 M652.2,379.0 Q659.5,382.2 659.4,388.9 M731.5,323.5 Q733.4,328.8 735.8,334.8 M570.5,463.3 Q567.8,473.2 566.4,476.9 M668.9,469.9 Q669.3,464.9 669.9,456.1 M672.5,256.4 Q672.0,266.9 671.3,270.9 M702.5,436.6 Q698.9,438.0 689.9,442.5 M603.7,340.1 Q614.1,341.7 616.6,337.6 M771.2,350.5 Q783.6,347.7 791.2,342.0 M750.5,387.3 Q744.8,389.5 740.2,397.5 M718.5,229.0 Q720.6,232.3 729.1,237.8 M652.6,298.4 Q658.8,299.1 662.9,293.8 M485.3,266.1 Q490.7,268.8 498.1,268.3 M794.6,248.9 Q789.5,243.5 782.8,231.8 M743.2,227.6 Q739.5,228.8 729.1,237.8 M616.9,390.4 Q612.5,393.6 604.3,400.2 M727.3,257.7 Q729.2,260.2 724.0,269.7 M768.0,253.7 Q769.0,243.0 771.9,239.7 M653.2,474.2 Q654.5,476.9 654.0,486.7 M637.7,456.2 Q630.3,462.7 629.6,467.9 M757.3,366.9 Q747.3,358.7 742.9,358.4 M632.0,314.9 Q639.0,310.9 640.0,301.4 M693.0,238.2 Q700.4,242.0 707.8,240.3 M645.8,445.0 Q643.0,443.4 638.7,435.9 M624.0,425.7 Q619.8,429.4 622.0,440.6 M740.6,244.3 Q735.4,249.4 727.3,257.7 M670.4,482.9 Q670.2,478.4 668.9,469.9 M626.2,495.6 Q632.9,500.9 639.5,509.4 M740.6,244.3 Q750.1,247.0 752.4,251.5 M628.0,384.8 Q617.9,381.8 608.7,378.5 M702.5,436.6 Q696.3,431.8 697.5,426.4 M673.2,378.5 Q679.2,369.8 683.5,366.3 M567.2,314.8 Q560.7,313.3 551.0,312.5 M794.0,271.6 Q791.5,267.7 781.9,265.7 M610.1,415.4 Q612.6,413.3 621.8,404.4 M640.4,480.3 Q645.5,487.2 654.0,486.7 M548.7,251.0 Q554.4,254.1 557.5,259.5 M554.9,338.9 Q548.5,332.2 542.0,320.7 M549.3,431.1 Q557.0,431.6 558.7,438.0 M549.0,497.8 Q548.8,487.8 551.9,484.3 M781.9,265.7 Q788.5,261.1 794.9,260.0 M869.8,266.6 Q873.4,271.4 880.5,273.7 M740.6,244.3 Q745.7,233.6 743.2,227.6 M607.4,438.1 Q602.1,430.3 596.4,423.6 M683.9,277.3 Q684.7,269.5 684.3,264.5 M689.9,442.5 Q683.1,446.4 681.3,453.7 M566.4,476.9 Q567.6,483.7 562.2,490.5 M799.0,286.3 Q801.9,290.2 797.6,301.8 M706.5,352.4 Q698.5,353.1 695.5,347.0 M554.1,457.4 Q550.5,465.1 553.0,471.5 M629.6,467.9 Q625.5,457.4 626.7,452.8 M498.0,214.8 Q494.1,209.8 490.5,198.7 M647.1,258.2 Q652.0,250.7 655.9,251.1 M710.4,265.4 Q700.9,265.5 696.0,257.7 M512.6,272.0 Q507.6,270.3 498.1,268.3 M598.5,373.8 Q602.2,374.7 608.7,378.5 M635.3,230.2 Q637.1,230.4 646.3,235.0 M697.4,411.6 Q694.3,414.3 685.6,419.2 M683.2,496.9 Q677.6,503.3 666.4,502.4 M536.8,395.7 Q539.8,386.3 540.0,380.2 M730.7,414.5 Q736.8,408.6 743.8,408.8 M616.9,390.4 Q620.3,386.4 628.0,384.8 M747.5,376.2 Q753.4,378.0 766.6,374.2 M713.4,408.9 Q711.2,415.3 709.0,424.0 M710.5,250.9 Q710.1,245.2 707.8,240.3 M705.3,331.9 Q705.2,325.6 708.1,321.2 M718.1,308.1 Q720.2,300.4 723.2,295.8 M647.1,258.2 Q639.9,261.1 634.9,264.5 M794.0,271.6 Q792.8,280.2 785.8,283.8 M747.2,295.3 Q754.0,300.9 755.0,306.9 M652.6,298.4 Q662.6,301.4 665.3,311.4 M566.4,476.9 Q574.2,483.1 576.4,486.5 M578.3,338.3 Q570.2,347.7 569.6,351.7 M666.4,502.4 Q659.5,501.7 655.4,499.2 M600.1,271.9 Q596.2,267.3 599.4,260.3 M610.0,324.3 Q614.5,329.8 616.6,337.6 M568.6,251.3 Q567.8,260.3 569.6,264.6 M490.5,198.7 Q500.7,195.9 504.2,201.0 M631.2,292.5 Q634.0,297.2 640.0,301.4 M584.5,353.5 Q587.0,344.7 592.3,338.7 M736.9,265.2 Q732.6,264.2 727.3,257.7 M718.6,464.5 Q715.6,456.3 707.7,450.0 M583.3,432.1 Q581.8,442.2 574.4,444.6 M631.4,217.6 Q638.8,212.8 651.9,213.1 M679.1,408.1 Q676.1,404.7 665.4,407.7 M563.7,393.2 Q564.0,403.4 568.2,405.8 M514.0,247.1 Q514.9,251.4 510.7,260.4 M645.8,445.0 Q646.8,455.3 649.2,457.7 M695.9,286.3 Q697.1,282.8 702.4,274.9 M553.7,273.3 Q546.7,268.8 543.6,265.5 M533.2,358.4 Q539.6,353.0 539.0,345.2 M697.4,411.6 Q696.8,422.7 697.5,426.4 M679.5,355.3 Q677.4,356.9 668.8,351.4 M626.2,495.6 Q635.5,492.7 644.4,495.8 M567.2,314.8 Q565.7,302.9 567.0,296.1 M498.0,214.8 Q486.1,206.0 477.7,202.8 M632.4,242.2 Q629.6,236.9 623.9,227.1 M614.6,263.0 Q611.5,259.7 616.0,251.4 M571.9,526.8 Q574.7,517.7 572.6,508.5 M541.8,226.3 Q546.7,229.3 543.9,238.7 M536.8,395.7 Q540.3,397.8 549.6,395.6 M652.9,312.0 Q647.5,303.7 640.0,301.4 M782.8,295.0 Q780.6,290.2 773.1,282.0 M604.5,213.1 Q598.4,220.4 591.0,231.3 M725.2,358.8 Q728.9,367.9 734.4,369.4 M544.0,334.3 Q548.1,339.1 550.5,351.0 M771.2,350.5 Q763.7,353.3 757.2,355.1 M591.4,487.6 Q588.3,493.6 582.1,498.9 M612.5,500.0 Q613.2,507.6 618.4,512.2 M803.0,312.6 Q796.6,313.6 790.2,311.8 M692.8,216.7 Q702.2,218.8 714.6,216.6 M559.2,362.3 Q562.1,355.8 569.6,351.7 M574.9,239.7 Q568.2,247.8 568.6,251.3 M744.9,450.5 Q734.2,452.8 727.9,449.8 M638.5,396.0 Q643.6,405.8 647.1,410.5 M679.1,408.1 Q683.9,411.1 685.6,419.2 M707.2,225.3 Q714.7,229.7 718.5,229.0 M557.7,205.8 Q546.9,209.0 537.1,207.8 M658.0,361.9 Q662.0,353.4 668.8,351.4 M635.9,375.8 Q639.4,367.1 642.7,365.2 M529.6,413.1 Q524.7,422.4 522.1,424.8 M635.9,375.8 Q634.8,382.3 628.0,384.8 M691.2,384.3 Q693.2,388.4 695.0,399.2 M814.3,317.4 Q818.9,326.5 819.2,330.7 M683.2,496.9 Q681.0,485.2 685.3,476.5 M565.1,217.3 Q567.9,222.4 570.2,229.2 M618.4,512.2 Q613.7,510.8 605.9,516.8 M600.1,271.9 Q594.8,271.2 585.3,267.8 M597.6,247.0 Q596.3,250.3 599.4,260.3 M659.4,388.9 Q652.2,389.7 651.0,396.0 M543.9,238.7 Q551.4,238.1 559.5,243.1 M539.0,345.2 Q540.8,347.0 550.5,351.0 M822.4,309.4 Q825.1,309.3 835.2,316.9 M624.0,425.7 Q619.5,421.3 610.1,415.4 M697.4,411.6 Q703.5,408.5 713.4,408.9 M763.3,385.9 Q754.7,380.5 747.5,376.2 M812.3,250.7 Q820.5,251.7 826.9,257.9 M567.0,296.1 Q576.6,295.3 584.5,292.4 M721.8,344.1 Q731.0,348.6 734.4,348.1 M605.6,286.3 Q605.0,279.8 600.1,271.9 M710.4,265.4 Q702.8,273.4 702.4,274.9 M814.9,239.1 Q823.9,243.0 830.6,245.2 M755.5,400.1 Q756.8,403.9 760.4,414.4 M637.7,456.2 Q629.1,457.8 626.7,452.8 M713.4,408.9 Q720.3,405.2 727.8,403.1 M638.5,396.0 Q647.9,395.9 651.0,396.0 M576.4,486.5 Q576.9,478.7 580.3,472.6 M718.6,464.5 Q723.2,458.1 727.9,449.8 M726.1,429.8 Q734.8,431.2 740.0,440.0 M556.0,231.3 Q565.1,232.0 570.2,229.2 M770.0,294.3 Q776.9,299.9 777.1,307.8 M677.4,213.7 Q669.4,223.9 667.5,226.5 M569.6,264.6 Q575.8,268.9 585.3,267.8 M612.5,500.0 Q607.2,505.2 595.2,506.6 M749.2,342.5 Q753.2,342.3 760.7,342.0 M760.3,285.0 Q760.4,275.8 759.4,270.3 M781.4,249.8 Q788.6,253.2 794.6,248.9 M616.0,251.4 Q624.9,247.6 632.4,242.2 M579.8,278.6 Q574.3,269.6 569.6,264.6 M803.0,312.6 Q803.1,304.0 797.6,301.8 M614.6,263.0 Q606.8,262.6 599.4,260.3 M637.7,456.2 Q645.7,448.0 645.8,445.0 M601.3,471.3 Q605.6,463.6 602.6,453.6 M515.7,199.9 Q509.4,207.7 510.3,218.4 M658.2,235.9 Q654.2,246.5 655.9,251.1 M683.2,496.9 Q678.0,493.1 670.4,482.9 M605.6,286.3 Q609.1,283.9 619.9,282.5 M569.6,264.6 Q566.4,259.2 557.5,259.5 M756.2,449.2 Q758.2,445.6 762.6,440.1 M706.5,352.4 Q717.1,346.0 721.8,344.1 M718.1,308.1 Q710.9,311.0 708.1,321.2 M572.6,508.5 Q577.9,504.9 582.1,498.9 M607.4,438.1 Q611.0,436.4 622.0,440.6 M624.9,272.1 Q625.1,265.9 625.8,257.5 M705.8,307.6 Q695.6,308.5 692.7,303.3 M668.8,366.9 Q676.6,367.5 683.5,366.3 M489.7,226.3 Q482.4,226.3 472.8,228.3 M475.7,257.8 Q473.0,265.3 468.9,274.6 M531.0,461.3 Q528.5,470.8 522.1,480.1 M557.7,205.8 Q553.3,217.5 556.0,231.3 M760.5,426.3 Q758.1,436.3 762.6,440.1 M666.4,502.4 Q656.8,494.1 654.0,486.7 M553.7,273.3 Q557.5,265.7 557.5,259.5 M824.8,294.9 Q830.2,292.6 843.2,295.0 M824.8,294.9 Q822.9,300.2 822.4,309.4 M696.0,257.7 Q701.8,264.1 702.4,274.9 M592.6,300.2 Q592.2,297.8 584.5,292.4 M642.8,469.1 Q643.9,462.8 649.2,457.7 M521.3,235.6 Q512.5,229.5 502.4,228.8 M554.9,338.9 Q550.2,339.1 539.0,345.2 M563.7,393.2 Q568.8,388.4 571.0,383.5 M565.9,340.6 Q570.5,342.9 569.6,351.7 M832.1,303.2 Q830.7,310.6 835.2,316.9 M590.7,523.9 Q591.0,513.2 595.2,506.6 M570.5,463.3 Q566.3,459.4 565.1,451.1 M672.5,256.4 Q678.7,257.6 684.3,264.5 M844.2,251.7 Q836.7,252.1 826.9,257.9 M616.9,481.8 Q619.0,480.9 629.0,483.7 M737.5,470.9 Q735.4,464.8 735.1,458.9 M757.3,366.9 Q759.9,367.8 766.6,374.2 M543.6,265.5 Q538.8,261.3 528.9,263.3 M839.8,263.7 Q847.3,263.4 854.4,258.1 M652.2,379.0 Q646.3,373.4 642.7,365.2 M585.6,461.4 Q581.1,468.2 580.3,472.6 M537.8,420.8 Q530.3,420.7 529.6,413.1 M730.7,414.5 Q732.8,412.4 727.8,403.1 M721.8,344.1 Q724.9,351.1 725.2,358.8 M640.0,301.4 Q634.4,304.6 626.8,302.8 M529.6,434.9 Q528.9,429.8 522.1,424.8 M698.7,457.2 Q688.7,453.0 681.3,453.7 M652.2,379.0 Q649.9,389.1 651.0,396.0 M697.4,411.6 Q692.9,406.3 695.0,399.2 M572.8,416.5 Q563.7,420.0 561.9,419.1 M755.5,400.1 Q745.6,398.4 740.2,397.5 M684.5,245.6 Q684.0,241.3 677.9,233.1 M718.1,308.1 Q708.9,309.2 705.8,307.6 M520.3,212.9 Q514.4,219.6 510.3,218.4 M854.4,258.1 Q849.0,265.6 847.9,271.3 M647.1,410.5 Q656.0,409.1 665.4,407.7 M531.0,461.3 Q526.0,463.4 518.8,466.9 M584.5,353.5 Q589.4,360.5 589.7,365.6 M721.8,344.1 Q726.8,337.1 735.8,334.8 M730.7,414.5 Q735.7,421.8 738.2,428.3 M475.7,257.8 Q472.3,251.6 474.4,246.5 M537.8,420.8 Q546.9,425.3 549.3,431.1 M695.5,347.0 Q685.9,352.1 679.5,355.3 M619.9,282.5 Q614.5,289.8 616.2,299.4 M637.7,456.2 Q646.8,453.3 649.2,457.7 M626.2,495.6 Q616.4,496.6 612.5,500.0 M747.2,295.3 Q740.8,284.6 738.8,281.3 M536.8,395.7 Q529.8,395.0 522.6,392.6 M543.9,238.7 Q546.1,236.8 556.0,231.3 M597.6,247.0 Q593.0,252.8 587.6,256.5 M824.1,283.7 Q816.6,283.1 813.3,280.5 M803.0,312.6 Q816.7,314.2 822.4,309.4 M645.0,273.7 Q651.3,273.0 659.6,280.1 M750.2,434.2 Q755.3,439.3 762.6,440.1 M579.8,278.6 Q581.9,274.1 585.3,267.8 M598.5,373.8 Q595.6,369.2 589.7,365.6 M584.5,353.5 Q589.0,357.1 597.9,356.7 M735.1,458.9 Q742.9,461.0 751.2,462.8 M549.3,431.1 Q554.3,425.5 561.9,419.1 M738.8,281.3 Q732.3,278.1 724.0,269.7 M584.5,353.5 Q582.0,360.9 576.2,367.5 M737.5,470.9 Q730.8,469.8 718.6,464.5 M545.4,369.1 Q544.9,371.5 540.0,380.2 M563.7,393.2 Q575.6,393.4 580.7,394.5 M698.7,457.2 Q701.4,455.6 707.7,450.0 M571.0,383.5 Q573.2,390.0 580.7,394.5 M598.5,373.8 Q594.7,366.7 597.9,356.7 M512.6,272.0 Q523.0,269.5 528.9,263.3 M620.2,311.7 Q623.8,309.5 626.8,302.8 M814.3,317.4 Q806.3,314.8 803.0,312.6 M665.2,213.4 Q659.3,217.6 652.4,225.4 M474.8,216.6 Q484.1,217.7 486.7,212.0 M559.5,243.1 Q565.3,232.3 570.2,229.2 M503.1,244.2 Q497.1,252.3 494.0,256.7 M617.6,369.0 Q613.3,375.5 608.7,378.5 M764.1,317.1 Q760.0,314.3 755.0,306.9 M720.3,369.4 Q717.5,377.1 708.9,377.6 M595.2,506.6 Q600.5,513.7 605.9,516.8 M477.7,202.8 Q478.9,207.7 474.8,216.6 M539.0,345.2 Q545.1,336.5 544.0,334.3 M658.2,235.9 Q662.0,236.1 666.6,243.1 M720.3,369.4 Q723.9,381.3 721.3,389.4 M624.0,425.7 Q628.9,422.7 640.9,422.3 M629.3,363.1 Q625.1,363.8 617.6,369.0 M839.8,263.7 Q830.7,265.1 826.7,269.5 M679.1,408.1 Q686.2,403.6 695.0,399.2 M522.1,480.1 Q518.4,471.8 518.8,466.9 M498.0,214.8 Q507.5,213.0 510.3,218.4 M809.3,293.2 Q808.9,284.5 813.3,280.5 M490.8,278.0 Q494.4,274.3 498.1,268.3 M812.3,250.7 Q813.5,248.5 814.9,239.1 M624.9,272.1 Q631.6,274.8 638.5,283.8 M770.0,265.8 Q761.6,268.8 759.4,270.3 M782.8,231.8 Q774.1,237.8 771.9,239.7 M567.2,314.8 Q574.7,313.6 578.9,316.3 M628.0,384.8 Q626.5,380.7 617.6,369.0 M755.5,400.1 Q751.9,390.8 750.5,387.3 M860.4,284.6 Q867.4,283.0 874.9,284.8 M498.0,214.8 Q502.8,218.8 502.4,228.8 M727.6,281.3 Q733.1,280.5 738.8,281.3 M626.2,495.6 Q630.1,488.9 629.0,483.7 M811.1,267.8 Q815.9,264.8 826.7,269.5 M477.7,202.8 Q483.5,199.8 490.5,198.7 M854.4,258.1 Q861.2,254.6 870.4,250.6 M679.1,312.0 Q671.4,315.6 669.9,327.0 M599.4,260.3 Q591.7,265.5 585.3,267.8 M679.1,312.0 Q684.5,311.2 692.7,303.3 M591.1,476.6 Q587.9,479.0 591.4,487.6 M747.7,420.1 Q743.7,412.1 743.8,408.8 M695.9,286.3 Q691.2,292.1 692.7,303.3 M570.1,433.9 Q575.3,423.8 572.8,416.5 M578.3,338.3 Q579.8,335.7 575.2,326.7 M726.1,429.8 Q722.8,436.7 720.3,439.2 M683.2,496.9 Q692.0,497.2 696.9,495.4 M696.9,495.4 Q691.7,486.8 685.3,476.5 M668.8,366.9 Q665.4,360.2 668.8,351.4 M629.3,363.1 Q630.4,359.0 629.9,348.8 M632.0,314.9 Q628.2,313.2 620.2,311.7 M770.0,294.3 Q766.0,287.9 760.3,285.0 M593.5,397.0 Q596.8,395.9 604.3,400.2 M616.9,390.4 Q613.6,382.8 608.7,378.5 M839.8,263.7 Q841.6,269.3 847.9,271.3 M750.1,263.3 Q757.9,263.8 759.4,270.3 M704.4,479.9 Q714.3,478.5 716.4,479.4 M638.7,435.9 Q645.2,436.3 652.7,433.8 M665.2,213.4 Q661.8,216.0 651.9,213.1 M571.0,383.5 Q576.3,376.4 576.2,367.5 M553.0,471.5 Q560.8,470.3 566.4,476.9 M515.7,199.9 Q518.3,202.9 520.3,212.9 M677.7,434.0 Q684.9,424.9 685.6,419.2 M677.9,233.1 Q673.3,234.6 666.6,243.1 M596.4,423.6 Q593.7,419.6 585.8,420.5 M477.7,202.8 Q478.7,205.8 486.7,212.0 M629.6,467.9 Q630.7,476.5 629.0,483.7 M489.7,226.3 Q494.4,226.8 502.4,228.8 M734.4,348.1 Q731.2,338.9 735.8,334.8 M614.8,237.4 Q620.4,243.5 632.4,242.2 M713.4,408.9 Q719.6,412.9 730.7,414.5 M777.1,307.8 Q771.8,309.1 764.1,317.1 M612.5,500.0 Q611.3,510.8 605.9,516.8 M684.5,245.6 Q690.9,238.7 693.0,238.2 M860.4,284.6 Q850.7,279.2 847.9,271.3 M750.2,434.2 Q756.9,443.5 756.2,449.2 M860.4,284.6 Q847.9,291.1 843.2,295.0 M668.9,469.9 Q657.9,469.7 653.2,474.2 M626.2,495.6 Q621.5,505.5 618.4,512.2 M632.4,242.2 Q627.9,248.0 625.8,257.5 M571.0,383.5 Q581.4,382.1 588.0,383.1 M635.3,230.2 Q632.8,232.9 632.4,242.2 M707.2,225.3 Q709.1,223.0 714.6,216.6 M657.8,266.3 Q647.5,270.1 645.0,273.7 M592.6,300.2 Q590.4,310.3 591.6,318.0 M485.3,266.1 Q486.0,271.9 490.8,278.0 M635.3,230.2 Q634.5,227.4 631.4,217.6 M742.4,325.6 Q736.2,330.3 735.8,334.8 M744.9,450.5 Q743.4,441.4 740.0,440.0 M773.1,282.0 Q776.5,280.7 785.8,283.8 M679.1,312.0 Q671.5,307.7 665.3,311.4 M726.1,429.8 Q726.2,421.7 730.7,414.5 M682.9,396.1 Q689.4,393.9 691.2,384.3 M851.1,306.7 Q846.3,308.6 835.2,316.9 M781.4,249.8 Q784.9,255.4 794.9,260.0 M558.3,504.7 Q565.6,503.6 572.6,508.5 M832.1,303.2 Q827.3,309.7 822.4,309.4 M757.3,366.9 Q765.4,365.5 773.8,365.1 M727.3,257.7 Q717.5,255.3 710.5,250.9 M673.2,378.5 Q674.7,373.4 668.8,366.9 M731.5,323.5 Q735.7,326.1 742.4,325.6 M474.8,216.6 Q474.1,223.3 472.8,228.3 M592.6,300.2 Q599.6,300.7 608.1,307.7 M619.9,282.5 Q627.6,286.0 631.2,292.5 M661.5,424.1 Q660.0,414.9 665.4,407.7 M632.0,314.9 Q627.1,310.5 626.8,302.8 M572.8,416.5 Q575.5,421.2 585.8,420.5 M714.6,216.6 Q717.3,219.7 718.5,229.0 M489.7,226.3 Q484.1,220.7 474.8,216.6 M574.9,239.7 Q573.3,232.8 570.2,229.2 M653.2,474.2 Q648.4,464.7 649.2,457.7 M665.2,213.4 Q667.0,223.8 667.5,226.5 M578.3,338.3 Q573.5,339.5 565.9,340.6 M708.9,377.6 Q717.1,385.5 721.3,389.4 M597.6,247.0 Q605.9,245.6 616.0,251.4 M596.4,440.4 Q592.8,433.4 583.3,432.1 M550.1,409.8 Q541.3,413.8 537.8,420.8 M599.4,260.3 Q595.1,257.8 587.6,256.5 M671.3,270.9 Q664.7,272.7 659.6,280.1 M614.8,237.4 Q617.6,246.3 616.0,251.4 M652.2,379.0 Q645.1,380.6 635.9,375.8 M771.2,350.5 Q771.2,346.5 778.6,337.4 M649.9,346.2 Q661.6,348.6 668.8,351.4 M626.8,332.6 Q620.7,339.0 616.6,337.6 M693.0,238.2 Q687.8,239.2 677.9,233.1 M498.0,214.8 Q488.6,215.4 486.7,212.0 M608.1,307.7 Q610.4,299.8 616.2,299.4 M617.9,210.1 Q623.5,221.8 623.9,227.1 M721.0,246.2 Q727.3,242.4 729.1,237.8 M819.2,330.7 Q827.7,320.5 835.2,316.9 M763.3,385.9 Q758.2,384.9 750.5,387.3 M691.2,384.3 Q700.2,383.0 704.1,388.4 M686.4,463.8 Q683.4,468.2 685.3,476.5 M529.6,434.9 Q533.9,426.3 537.8,420.8 M812.3,250.7 Q805.4,242.3 800.4,233.9 M474.4,246.5 Q481.4,251.9 494.0,256.7 M570.5,463.3 Q574.2,461.8 585.6,461.4 M768.0,253.7 Q761.0,252.8 752.4,251.5 M550.1,409.8 Q552.1,414.6 561.9,419.1 M553.7,273.3 Q564.9,267.9 569.6,264.6 M556.0,231.3 Q555.9,239.8 559.5,243.1 M658.0,361.9 Q656.7,356.5 649.9,346.2 M782.8,295.0 Q784.0,287.2 785.8,283.8 M768.0,253.7 Q765.9,260.8 770.0,265.8 M624.9,272.1 Q627.2,269.6 634.9,264.5 M687.7,321.2 Q680.6,316.1 679.1,312.0 M567.2,314.8 Q566.4,323.3 563.2,329.5 M750.1,263.3 Q749.7,258.1 752.4,251.5 M531.1,250.8 Q540.7,246.8 543.9,238.7 M597.9,356.7 Q593.4,357.5 589.7,365.6 M809.3,293.2 Q800.1,295.1 797.6,301.8 M626.8,332.6 Q624.6,342.1 629.9,348.8 M638.5,396.0 Q636.9,397.3 633.1,405.8 M710.4,265.4 Q720.9,267.2 724.0,269.7 M718.1,325.9 Q716.3,321.1 708.1,321.2 M489.7,226.3 Q489.5,222.6 486.7,212.0 M652.4,225.4 Q653.7,217.4 651.9,213.1 M757.3,366.9 Q755.9,370.1 747.5,376.2 M693.0,238.2 Q699.3,231.7 707.2,225.3 M671.3,270.9 Q676.0,270.7 684.3,264.5 M521.3,235.6 Q526.0,240.0 531.1,250.8 M633.1,405.8 Q626.1,407.1 621.8,404.4 M576.2,367.5 Q576.1,356.1 569.6,351.7 M557.7,205.8 Q563.4,214.4 565.1,217.3 M541.8,226.3 Q535.4,217.4 537.1,207.8 M731.7,226.4 Q728.3,228.8 718.5,229.0 M550.1,409.8 Q562.6,409.4 568.2,405.8 M706.5,352.4 Q699.5,361.3 696.6,364.5 M549.6,395.6 Q544.7,384.8 540.0,380.2 M742.4,325.6 Q748.0,324.4 755.2,330.8 M695.9,286.3 Q693.5,286.5 685.0,294.5 M559.2,362.3 Q557.9,353.9 550.5,351.0 M593.0,411.8 Q595.3,407.3 604.3,400.2 M794.6,248.9 Q795.3,254.7 794.9,260.0 M631.2,292.5 Q627.4,296.7 626.8,302.8 M662.9,293.8 Q663.4,305.9 665.3,311.4 M790.7,329.1 Q791.3,338.5 791.2,342.0 M649.9,346.2 Q651.0,335.8 651.2,328.1 M669.9,327.0 Q664.7,319.3 665.3,311.4 M760.5,426.3 Q768.0,417.8 772.8,417.0 M673.2,378.5 Q665.2,385.1 659.4,388.9 M679.1,408.1 Q679.2,405.9 682.9,396.1 M574.9,239.7 Q583.5,237.5 591.0,231.3 M734.3,299.8 Q723.7,306.6 718.1,308.1 M727.6,281.3 Q724.2,285.6 723.2,295.8 M614.6,263.0 Q619.8,257.8 625.8,257.5 M605.3,226.4 Q611.3,221.6 617.9,210.1 M531.0,461.3 Q529.4,452.6 529.5,448.6 M644.4,495.8 Q643.7,501.4 639.5,509.4 M626.8,332.6 Q634.4,330.9 640.6,324.2 M708.9,377.6 Q704.6,380.7 704.1,388.4 M652.6,298.4 Q649.6,306.5 652.9,312.0 M756.2,449.2 Q747.1,453.2 744.9,450.5 M685.0,294.5 Q685.3,301.7 692.7,303.3 M514.0,247.1 Q510.8,247.7 503.1,244.2 M613.1,458.8 Q625.2,462.4 629.6,467.9 M652.4,225.4 Q661.6,226.6 667.5,226.5 M581.4,517.8 Q573.0,513.5 572.6,508.5 M608.1,307.7 Q610.4,314.4 610.0,324.3 M531.1,250.8 Q528.2,253.8 528.9,263.3 M651.2,328.1 Q642.1,323.5 640.6,324.2 M679.5,355.3 Q675.5,344.0 678.7,340.3 M591.1,476.6 Q596.8,479.4 605.6,482.1 M565.9,340.6 Q566.3,332.2 563.2,329.5 M661.1,443.9 Q660.3,441.6 652.7,433.8 M559.2,362.3 Q551.9,362.5 545.4,369.1 M874.9,284.8 Q872.9,271.8 869.8,266.6 M749.2,342.5 Q739.5,339.6 735.8,334.8 M521.3,235.6 Q511.0,243.3 503.1,244.2 M721.0,246.2 Q725.0,253.5 727.3,257.7 M760.4,414.4 Q763.2,420.3 760.5,426.3 M610.4,353.1 Q606.3,347.8 603.7,340.1 M750.2,434.2 Q752.2,427.7 760.5,426.3 M734.6,384.4 Q724.8,389.1 721.3,389.4 M550.1,409.8 Q540.8,408.9 529.6,413.1 M683.9,277.3 Q693.0,279.0 695.9,286.3 M591.6,318.0 Q582.9,315.8 578.9,316.3 M565.1,217.3 Q562.8,225.2 556.0,231.3 M635.3,230.2 Q633.6,230.6 623.9,227.1 M705.3,331.9 Q701.9,335.2 694.1,335.1 M721.0,246.2 Q717.7,248.8 710.5,250.9 M542.0,320.7 Q550.2,318.5 551.0,312.5 M613.1,458.8 Q607.9,457.1 602.6,453.6 M534.9,275.0 Q531.8,268.0 528.9,263.3 M794.0,271.6 Q795.8,268.5 794.9,260.0 M541.8,226.3 Q550.1,225.2 556.0,231.3 M874.9,284.8 Q876.8,278.6 880.5,273.7 M758.6,230.5 Q759.4,239.4 752.4,251.5 M593.5,397.0 Q585.4,392.3 580.7,394.5 M718.6,464.5 Q707.8,471.1 704.4,479.9 M747.7,420.1 Q742.3,424.7 738.2,428.3 M760.4,414.4 Q762.9,419.3 772.8,417.0 M576.9,211.7 Q573.7,211.9 565.1,217.3 M592.6,300.2 Q592.4,293.4 593.0,283.0 M579.8,278.6 Q579.0,283.3 584.5,292.4 M756.2,449.2 Q751.6,456.4 751.2,462.8 M502.4,228.8 Q504.7,238.9 503.1,244.2 M539.1,481.9 Q539.3,471.3 541.8,468.3 M771.2,350.5 Q769.3,356.7 773.8,365.1 M696.0,257.7 Q700.0,252.7 710.5,250.9 M605.6,482.1 Q613.6,481.8 616.9,481.8 M661.1,443.9 Q653.6,450.1 649.2,457.7 M836.2,277.1 Q832.9,284.3 824.1,283.7 M704.1,388.4 Q714.3,385.6 721.3,389.4 M710.4,285.6 Q719.3,293.7 723.2,295.8 M640.9,422.3 Q646.4,425.3 652.7,433.8 M747.5,376.2 Q750.4,384.3 750.5,387.3 M570.1,433.9 Q576.1,441.9 574.4,444.6 M686.4,463.8 Q690.4,457.8 698.7,457.2 M735.1,458.9 Q743.6,457.6 744.9,450.5 M869.8,266.6 Q876.4,259.9 880.1,260.4 M697.5,426.4 Q688.5,423.4 685.6,419.2 M758.6,230.5 Q754.6,230.9 743.2,227.6 M604.5,213.1 Q595.9,216.2 586.2,217.7 M640.9,422.3 Q643.8,419.1 647.1,410.5 M553.0,471.5 Q547.2,473.0 541.8,468.3 M583.3,432.1 Q584.1,426.1 585.8,420.5 M740.6,244.3 Q753.5,238.7 758.6,230.5 M773.1,282.0 Q766.3,279.6 760.3,285.0 M502.4,228.8 Q505.7,221.4 510.3,218.4 M558.3,504.7 Q553.0,497.6 549.0,497.8 M668.9,469.9 Q676.4,472.2 685.3,476.5 M593.0,411.8 Q591.9,414.7 585.8,420.5 M794.0,271.6 Q798.4,279.7 799.0,286.3 M824.8,294.9 Q829.3,301.4 832.1,303.2 M686.4,463.8 Q681.2,457.0 669.9,456.1 M755.2,330.8 Q756.2,332.7 760.7,342.0 M604.5,213.1 Q605.6,216.2 605.3,226.4 M616.9,390.4 Q617.7,400.6 621.8,404.4 M661.1,443.9 Q664.7,449.2 669.9,456.1 M483.1,239.8 Q477.6,251.1 475.7,257.8 M652.6,298.4 Q646.4,299.8 640.0,301.4 M770.0,294.3 Q774.5,285.5 773.1,282.0 M731.5,323.5 Q721.0,327.9 718.1,325.9 M839.8,263.7 Q840.3,272.3 836.2,277.1 M529.6,434.9 Q532.0,441.9 529.5,448.6 M718.6,464.5 Q714.2,469.5 716.4,479.4 M819.2,330.7 Q822.5,317.2 822.4,309.4 M571.9,526.8 Q582.1,524.6 590.7,523.9 M624.9,272.1 Q625.8,279.4 619.9,282.5 M563.2,329.5 Q568.1,325.1 575.2,326.7 M749.2,342.5 Q752.6,337.7 755.2,330.8 M616.0,251.4 Q617.2,254.3 625.8,257.5 M522.6,392.6 Q523.2,401.5 529.6,413.1 M485.3,266.1 Q479.1,273.7 468.9,274.6 M597.9,356.7 Q591.9,346.5 592.3,338.7 M626.8,332.6 Q629.5,327.3 632.0,314.9 M556.4,373.6 Q566.8,380.9 571.0,383.5 M638.5,283.8 Q632.1,290.2 631.2,292.5 M647.1,410.5 Q650.4,399.6 651.0,396.0 M752.4,251.5 Q755.2,261.0 759.4,270.3 M605.6,482.1 Q596.0,482.2 591.4,487.6 M612.5,500.0 Q614.0,487.0 616.9,481.8 M518.8,466.9 Q529.0,467.7 541.8,468.3 M880.5,273.7 Q878.5,267.2 880.1,260.4 M692.8,216.7 Q696.0,227.2 693.0,238.2 M485.3,266.1 Q479.6,263.4 475.7,257.8 M591.6,318.0 Q586.5,319.3 575.2,326.7 M696.9,495.4 Q703.3,490.9 704.4,479.9 M595.2,506.6 Q592.0,500.3 582.1,498.9 M880.5,273.7 Q878.6,260.8 870.4,250.6 M674.1,288.7 Q665.7,282.7 659.6,280.1 M593.5,397.0 Q593.1,391.1 588.0,383.1 M548.7,251.0 Q543.5,243.3 543.9,238.7 M591.1,476.6 Q596.9,476.6 601.3,471.3 M554.1,457.4 Q549.2,454.5 542.5,448.9 M812.3,250.7 Q819.9,250.8 830.6,245.2 M483.1,239.8 Q479.7,244.0 474.4,246.5 M667.5,226.5 Q658.0,220.4 651.9,213.1 M695.5,347.0 Q694.6,354.9 696.6,364.5 M734.3,299.8 Q741.9,305.8 742.3,312.8 M593.0,411.8 Q592.3,417.0 596.4,423.6 M731.5,323.5 Q734.8,319.8 742.3,312.8 M698.7,457.2 Q692.0,451.5 689.9,442.5 M570.1,433.9 Q564.2,435.3 558.7,438.0 M576.9,211.7 Q574.2,224.3 570.2,229.2 M601.3,471.3 Q604.2,474.4 605.6,482.1 M702.5,436.6 Q704.3,427.5 709.0,424.0 M661.5,424.1 Q662.4,437.3 661.1,443.9 M695.5,347.0 Q691.3,339.2 694.1,335.1 M778.6,337.4 Q781.6,333.5 790.7,329.1 M734.4,348.1 Q741.3,350.4 742.9,358.4 M543.6,265.5 Q553.2,261.7 557.5,259.5 M696.0,257.7 Q690.4,261.9 684.3,264.5 M510.7,260.4 Q507.9,267.9 498.1,268.3 M734.4,369.4 Q742.5,364.5 742.9,358.4 M652.4,225.4 Q653.0,232.5 646.3,235.0 M515.7,199.9 Q510.6,201.2 504.2,201.0 M781.4,249.8 Q780.6,238.0 782.8,231.8 M558.3,504.7 Q559.9,495.6 562.2,490.5 M860.4,284.6 Q866.5,282.6 880.5,273.7 M574.9,239.7 Q564.9,245.1 559.5,243.1 M679.5,355.3 Q674.2,359.2 668.8,366.9 M669.9,456.1 Q674.8,451.6 681.3,453.7 M562.2,490.5 Q557.4,485.9 551.9,484.3 M770.0,294.3 Q772.4,292.4 782.8,295.0 M559.2,362.3 Q557.1,371.3 556.4,373.6 M567.0,296.1 Q562.1,292.7 561.6,284.1 M510.7,260.4 Q506.4,251.1 503.1,244.2 M605.3,226.4 Q597.3,229.0 591.0,231.3 M549.6,395.6 Q534.6,395.0 522.6,392.6 M652.9,312.0 Q661.1,314.8 665.3,311.4 M744.9,450.5 Q753.1,446.0 762.6,440.1 M515.7,199.9 Q523.5,204.0 537.1,207.8 M533.2,358.4 Q544.9,352.2 550.5,351.0 M485.3,266.1 Q486.3,257.4 494.0,256.7 M584.5,353.5 Q575.1,351.6 569.6,351.7 M607.4,438.1 Q602.3,438.4 596.4,440.4 M510.3,218.4 Q511.1,210.3 504.2,201.0 M811.1,267.8 Q805.6,267.6 794.0,271.6 M747.2,295.3 Q738.7,297.9 734.3,299.8 M522.1,480.1 Q526.6,482.7 539.1,481.9 M734.6,384.4 Q736.0,392.7 740.2,397.5 M614.8,237.4 Q610.2,234.6 605.3,226.4 M707.2,225.3 Q705.1,236.3 707.8,240.3 M541.8,226.3 Q540.6,221.4 531.8,217.9 M874.9,284.8 Q870.1,286.9 863.9,296.9 M684.5,245.6 Q690.7,251.0 696.0,257.7 M489.7,226.3 Q488.6,235.0 483.1,239.8 M474.4,246.5 Q473.3,264.5 468.9,274.6 M704.1,388.4 Q695.7,392.5 695.0,399.2 M843.2,295.0 Q840.6,289.3 836.2,277.1 M692.8,216.7 Q683.6,217.4 677.4,213.7 M494.0,256.7 Q498.6,262.4 498.1,268.3 M658.0,361.9 Q665.0,366.4 668.8,366.9 M616.2,299.4 Q622.8,303.9 626.8,302.8 M710.4,285.6 Q702.8,282.9 702.4,274.9 M632.4,242.2 Q635.8,239.3 646.3,235.0 M844.2,251.7 Q836.3,248.7 830.6,245.2 M563.7,393.2 Q559.4,392.7 549.6,395.6 M586.6,450.0 Q594.6,453.8 602.6,453.6 M869.8,266.6 Q862.4,262.8 854.4,258.1 M790.7,329.1 Q784.2,331.2 775.9,325.7 M740.2,397.5 Q738.6,402.6 743.8,408.8 M661.5,424.1 Q659.6,425.3 652.7,433.8 M794.6,248.9 Q799.7,240.3 800.4,233.9 M571.9,526.8 Q574.1,524.4 581.4,517.8 M731.7,226.4 Q724.6,223.4 714.6,216.6 M628.0,384.8 Q635.3,392.4 638.5,396.0 M697.4,411.6 Q707.1,420.6 709.0,424.0 M539.1,481.9 Q542.0,479.8 551.9,484.3 M533.2,358.4 Q540.5,362.4 545.4,369.1 M671.3,270.9 Q663.2,271.9 657.8,266.3 M677.7,434.0 Q681.7,437.5 689.9,442.5 M645.8,445.0 Q657.2,445.9 661.1,443.9 M558.7,438.0 Q567.3,438.9 574.4,444.6 M760.5,426.3 Q756.5,422.4 747.7,420.1 M631.2,292.5 Q627.4,294.9 616.2,299.4 M747.5,376.2 Q740.2,379.6 734.6,384.4 M702.5,436.6 Q708.4,445.2 707.7,450.0 M731.7,226.4 Q731.2,228.4 729.1,237.8 M657.8,266.3 Q655.9,271.8 659.6,280.1 M832.1,303.2 Q839.4,297.9 843.2,295.0 M554.1,457.4 Q546.8,462.2 541.8,468.3 M655.9,251.1 Q657.4,249.6 666.6,243.1 M553.0,471.5 Q550.9,481.6 551.9,484.3 M640.4,480.3 Q645.7,488.7 644.4,495.8 M634.9,264.5 Q631.1,262.7 625.8,257.5 M626.7,452.8 Q620.9,450.6 622.0,440.6 M554.9,338.9 Q559.9,334.7 563.2,329.5 M705.3,331.9 Q713.3,329.6 718.1,325.9 M600.1,271.9 Q599.2,277.6 593.0,283.0 M548.7,251.0 Q538.5,248.3 531.1,250.8 M755.5,400.1 Q757.8,392.1 763.3,385.9 M749.2,342.5 Q751.8,349.2 757.2,355.1 M512.6,272.0 Q512.5,264.9 510.7,260.4 M696.6,364.5 Q689.8,367.0 683.5,366.3 M770.0,294.3 Q766.5,298.2 755.0,306.9 M521.3,235.6 Q514.2,242.9 514.0,247.1 M737.5,470.9 Q746.6,468.8 751.2,462.8 M567.0,296.1 Q559.2,292.3 553.9,295.3 M750.2,434.2 Q743.1,433.9 738.2,428.3 M520.3,212.9 Q526.4,211.6 537.1,207.8 M629.6,467.9 Q635.0,471.7 642.8,469.1 M747.2,295.3 Q749.8,291.0 760.3,285.0 M624.0,425.7 Q629.7,432.6 638.7,435.9 M673.2,378.5 Q682.5,380.8 691.2,384.3 M738.2,428.3 Q743.0,433.8 740.0,440.0 M706.5,352.4 Q717.0,356.7 725.2,358.8 M554.1,457.4 Q558.1,454.9 565.1,451.1 M720.3,439.2 Q717.6,448.4 707.7,450.0 M727.9,449.8 Q733.4,445.8 740.0,440.0 M639.5,509.4 Q648.9,501.2 655.4,499.2 M814.9,239.1 Q819.1,249.1 826.9,257.9 M590.7,523.9 Q601.3,519.8 605.9,516.8 M669.9,327.0 Q676.8,334.2 678.7,340.3 M814.3,317.4 Q812.8,329.4 806.0,334.7 M576.4,486.5 Q582.5,486.2 591.4,487.6 M567.2,314.8 Q567.6,323.1 575.2,326.7 M708.9,377.6 Q702.9,374.0 696.6,364.5 M673.2,378.5 Q674.8,386.9 682.9,396.1 M631.4,217.6 Q630.4,220.0 623.9,227.1 M568.6,251.3 Q564.4,250.2 559.5,243.1 M670.4,482.9 Q670.6,490.3 666.4,502.4 M576.4,486.5 Q578.8,491.7 582.1,498.9 M658.2,235.9 Q654.8,227.2 652.4,225.4 M522.6,392.6 Q534.5,386.9 540.0,380.2 M605.6,286.3 Q613.8,294.2 616.2,299.4 M542.5,448.9 Q532.6,447.6 529.5,448.6 M782.8,295.0 Q777.2,299.8 777.1,307.8 M489.7,226.3 Q496.0,222.8 498.0,214.8 M514.0,247.1 Q518.7,251.0 531.1,250.8 M576.2,367.5 Q579.2,362.7 589.7,365.6 M554.9,338.9 Q563.7,336.5 565.9,340.6 M839.8,263.7 Q834.3,263.3 826.9,257.9 M687.7,321.2 Q687.3,330.7 694.1,335.1 M490.5,198.7 Q487.4,208.1 486.7,212.0 M770.0,265.8 Q778.2,265.6 781.9,265.7 M629.3,363.1 Q636.9,363.6 642.7,365.2 M645.8,445.0 Q646.0,440.1 652.7,433.8 M602.6,453.6 Q600.4,443.6 596.4,440.4 M736.9,265.2 Q730.3,265.4 724.0,269.7 M647.1,258.2 Q651.6,263.1 657.8,266.3 M760.4,414.4 Q752.2,416.0 747.7,420.1 M735.1,458.9 Q727.8,456.0 727.9,449.8 M498.0,214.8 Q503.5,211.9 504.2,201.0 M727.8,403.1 Q724.2,395.4 721.3,389.4 M677.4,213.7 Q676.5,224.4 677.9,233.1 M799.0,286.3 Q793.0,281.7 785.8,283.8 M549.3,431.1 Q545.5,443.4 542.5,448.9 M768.0,253.7 Q773.2,252.6 781.4,249.8 M556.4,373.6 Q554.7,368.3 545.4,369.1 M742.3,312.8 Q752.3,308.5 755.0,306.9 M760.7,342.0 Q759.0,347.0 757.2,355.1 M639.5,509.4 Q627.2,510.4 618.4,512.2 M554.9,338.9 Q553.9,345.5 550.5,351.0 M762.6,440.1 Q764.4,430.4 772.8,417.0 M644.4,495.8 Q648.9,500.9 655.4,499.2 M674.1,288.7 Q670.2,294.6 662.9,293.8 M593.5,397.0 Q591.7,401.4 593.0,411.8 M603.7,340.1 Q594.4,337.0 592.3,338.7 M790.7,329.1 Q801.5,328.2 806.0,334.7 M604.3,400.2 Q614.6,398.6 621.8,404.4 M860.4,284.6 Q858.2,294.4 863.9,296.9 M654.0,486.7 Q656.8,496.0 655.4,499.2 M591.1,476.6 Q583.8,471.7 580.3,472.6 M839.8,263.7 Q844.5,259.8 844.2,251.7 M665.4,407.7 Q656.3,403.5 651.0,396.0 M684.5,245.6 Q679.5,247.3 672.5,256.4 M747.5,376.2 Q744.7,370.1 734.4,369.4" stroke="#fbfbfb" stroke-width="1.5" fill="none" opacity="0.75"/><path d="M648,344 L660,300 L672,262 L690,232 L700,214 M648,344 L625,315 L608,290 L590,255 L575,228 L563,205 M608,290 L585,262 L545,255 L510,260 L474,264 M510,260 L490,240 L481,212 M648,344 L690,320 L735,290 L790,295 L845,307 L867,279 L880,258 M648,344 L700,370 L755,389 M648,344 L690,395 L720,420 L752,442 M648,344 L630,400 L605,450 L568,480 L547,507 M648,344 L600,380 L553,413 L520,420 M845,307 L812,314 L790,345 L765,380 L755,389 L762,420 L752,442 L730,460 L697,495 L650,508 L616,513 L585,525 M700,214 L690,250 L735,290 M563,205 L640,210 L700,214 M568,480 L616,500 L641,490 L690,480 L730,460" stroke="#fdfdfd" stroke-width="2" fill="none" stroke-linejoin="round"/></g></g><polygon points="464.0,270.0 464.3,283.4 495.9,279.8 514.8,279.0 528.3,273.5 546.3,279.0 554.4,293.3 548.0,306.8 534.6,320.0 533.0,340.0 533.0,356.5 529.8,379.7 519.8,389.7 523.0,409.7 519.8,426.3 529.8,446.3 528.0,452.3 518.7,461.6 513.0,473.0 514.0,479.0 518.7,489.4 509.5,492.8 497.9,500.4 488.6,496.3 474.7,495.2 462.0,497.5 464.3,489.4 467.8,467.4 466.6,456.2 460.3,440.0 454.3,429.5 459.3,419.4 452.3,424.4 444.2,421.4 448.2,409.2 449.2,395.0 456.3,385.0 464.4,362.7 468.4,344.5 472.5,320.2 469.4,300.0" fill="#cfcfcf" stroke="none"/><path d="M525,202 L530,226 L538,231 L536,250 L540,275 L546,283 M538,231 L552,225 L571,226 L594,223 L617,225 L640,230 L665,228 L690,232 M533,340 L560,332 L600,325 L630,320 L650,315 L666,307 L682,311 L702,305 L720,300 M600,325 L605,350 L590,400 L585,440 L575,452 M519,426 L545,440 L575,452 L610,445 L650,440 L700,455 L722,472 M690,232 L715,260 L700,272 L672,262 M715,230 L720,262 L715,300 L730,340 L762,360 M800,236 L808,280 L795,328 M762,360 L745,400 L722,440 L730,462 M722,440 L700,455" stroke="#8c8c8c" stroke-width="1.3" stroke-dasharray="1.5,2.4" fill="none"/><polyline points="464.3,283.4 495.9,279.8 514.8,279.0 528.3,273.5 546.3,279.0 554.4,293.3 548.0,306.8 534.6,320.0 533.0,340.0 533.0,356.5 529.8,379.7 519.8,389.7 523.0,409.7 519.8,426.3 529.8,446.3 528.0,452.3 518.7,461.6 513.0,473.0" fill="none" stroke="#909090" stroke-width="1.3" stroke-dasharray="1.5,2.4"/><polyline points="696.5,581.0 711.0,595.5 715.0,630.8 720.7,669.6 737.0,700.0" fill="none" stroke="#fff" stroke-width="1.3" stroke-linejoin="round"/><polyline points="1071.0,501.8 1057.6,523.5 1061.0,573.7 1037.6,617.0 1047.6,660.7 1064.0,700.0" fill="none" stroke="#fff" stroke-width="1.3" stroke-linejoin="round"/><polyline points="997.0,20.0 996.9,32.5 993.2,39.8 985.8,49.7 983.4,57.1 982.1,66.9 978.5,74.3 983.4,73.1 987.1,64.4 992.0,60.8 1005.5,60.8 1008.0,69.4 1012.9,79.2 1016.6,87.8" fill="none" stroke="#fff" stroke-width="1.3" stroke-linejoin="round"/><polyline points="1016.6,87.8 1008.0,94.0 1012.9,103.8 1019.0,111.2 1012.9,118.6 1003.1,126.0 1004.3,133.3 1011.7,143.2 1012.9,153.0 1010.4,162.9 1019.0,167.8 1033.8,172.7 1038.7,177.6 1036.3,187.5 1032.6,194.9" fill="none" stroke="#fff" stroke-width="1.3" stroke-linejoin="round"/><polyline points="1016.6,87.8 1028.9,82.9 1043.7,80.4 1051.0,76.8 1054.7,66.9 1060.9,60.8 1065.8,66.9 1075.6,79.2 1080.6,82.9 1081.8,90.3 1085.5,85.4 1089.2,71.8 1094.1,59.5 1100.3,58.3 1107.6,65.7 1119.9,69.4 1122.4,59.5 1129.8,54.6 1133.5,44.8 1142.1,41.1 1154.4,43.5 1161.8,34.9 1169.2,32.5 1175.0,28.0" fill="none" stroke="#fff" stroke-width="1.3" stroke-linejoin="round"/><polyline points="1110.0,20.0 1112.6,32.5 1122.4,37.4 1133.5,44.8" fill="none" stroke="#fff" stroke-width="1.3" stroke-linejoin="round"/><ellipse cx="1158" cy="597" rx="4.5" ry="1.6" transform="rotate(-35 1158 597)" fill="#cfcfcf" stroke="#fff" stroke-width="1"/><circle cx="1148" cy="635.5" r="3" fill="#cfcfcf" stroke="#fff" stroke-width="1"/><ellipse cx="722.5" cy="71.5" rx="4" ry="1.8" transform="rotate(20 722.5 71.5)" fill="#cfcfcf" stroke="#fff" stroke-width="1"/><ellipse cx="727" cy="84.5" rx="1.8" ry="4" transform="rotate(-25 727 84.5)" fill="#cfcfcf" stroke="#fff" stroke-width="1"/><circle cx="690.5" cy="47" r="1.4" fill="#fff"/><ellipse cx="1110.9" cy="225.8" rx="1.5" ry="1.5" fill="#fff"/><ellipse cx="1125" cy="238.5" rx="4" ry="1.6" fill="#cfcfcf" stroke="#fff" stroke-width="1"/><text x="856.7" y="46.5" text-anchor="middle" font-family="Liberation Sans" font-weight="bold" font-size="8.9" fill="#1e1e1e">Francia</text><text x="1056.5" y="43.8" text-anchor="middle" font-family="Liberation Sans" font-weight="bold" font-size="8.9" fill="#1e1e1e">Suiza</text><text x="1027" y="195.6" text-anchor="middle" font-family="Liberation Sans" font-weight="bold" font-size="8.9" fill="#1e1e1e">Mónaco</text><text x="826.7" y="251.5" text-anchor="middle" font-family="Liberation Sans" font-weight="bold" font-size="8.9" fill="#1e1e1e">Andorra</text><text x="496.7" y="382.2" text-anchor="middle" font-family="Liberation Sans" font-weight="bold" font-size="8.9" fill="#1e1e1e">Portugal</text><text x="1102.8" y="621.2" text-anchor="middle" font-family="Liberation Sans" font-weight="bold" font-size="8.9" fill="#1e1e1e">Túnez</text><text x="1160" y="280.5" text-anchor="start" font-family="Liberation Sans" font-weight="bold" font-size="8.9" fill="#1e1e1e">Ciudad del Vaticano</text><text x="608.8" y="293.5" text-anchor="middle" font-family="Liberation Sans" font-weight="normal" font-size="10" fill="#404040">Valladolid</text><text x="632" y="374.6" text-anchor="middle" font-family="Liberation Sans" font-weight="normal" font-size="10" fill="#404040">Toledo</text><text x="552.8" y="417" text-anchor="middle" font-family="Liberation Sans" font-weight="normal" font-size="10" fill="#404040">Mérida</text><text x="669.5" y="574.3" text-anchor="middle" font-family="Liberation Sans" font-weight="normal" font-size="10" fill="#404040">Melilla</text><text x="733.3" y="239" text-anchor="middle" font-family="Liberation Sans" font-weight="normal" font-size="10" fill="#404040">Pamplona/Iruña</text><text x="687" y="255.2" text-anchor="middle" font-family="Liberation Sans" font-weight="normal" font-size="10" fill="#404040">Logroño</text><text x="679" y="242" text-anchor="middle" font-family="Liberation Sans" font-weight="normal" font-size="10" fill="#404040">Gasteiz</text><text x="740" y="457.6" text-anchor="middle" font-family="Liberation Sans" font-weight="normal" font-size="10" fill="#404040">Murcia</text><text x="480" y="231" text-anchor="middle" font-family="Liberation Sans" font-weight="normal" font-size="10" fill="#404040">Santiago de</text><text x="480" y="244" text-anchor="middle" font-family="Liberation Sans" font-weight="normal" font-size="10" fill="#404040">Compostela</text><text x="569" y="211.8" text-anchor="middle" font-family="Liberation Sans" font-weight="normal" font-size="10" fill="#404040">Oviedo/Uviéu</text><text x="678" y="230.4" text-anchor="middle" font-family="Liberation Sans" font-weight="normal" font-size="10" fill="#404040">Vitoria-</text><text x="740" y="294.6" text-anchor="middle" font-family="Liberation Sans" font-weight="normal" font-size="10" fill="#404040">Zaragoza</text><text x="757.5" y="392.6" text-anchor="middle" font-family="Liberation Sans" font-weight="normal" font-size="10" fill="#404040">Valencia</text><text x="842" y="309.6" text-anchor="middle" font-family="Liberation Sans" font-weight="normal" font-size="10" fill="#404040">Barcelona</text><text x="640" y="210" text-anchor="middle" font-family="Liberation Sans" font-weight="normal" font-size="10" fill="#404040">Santander</text><text x="587.8" y="549.1" text-anchor="middle" font-family="Liberation Sans" font-weight="normal" font-size="10" fill="#3a4a5a">Ceuta</text><path d="M482.00,212.50 L482.00,192.00 A20.5,20.5 0 0 1 482.00,233.00 Z" fill="#52b96d" stroke="#1e1e1e" stroke-width="0.45"/><path d="M482.00,212.50 L482.00,233.00 A20.5,20.5 0 0 1 464.25,202.25 Z" fill="#d62ee0" stroke="#1e1e1e" stroke-width="0.45"/><path d="M482.00,212.50 L464.25,202.25 A20.5,20.5 0 0 1 474.32,193.49 Z" fill="#d8110f" stroke="#1e1e1e" stroke-width="0.45"/><path d="M482.00,212.50 L474.32,193.49 A20.5,20.5 0 0 1 482.00,192.00 Z" fill="#0e2a85" stroke="#1e1e1e" stroke-width="0.45"/><circle cx="482" cy="212.5" r="20.5" fill="none" stroke="#2e1f33" stroke-width="1"/><path d="M481.00,231.00 L481.00,211.50 A19.5,19.5 0 0 1 500.20,227.61 Z" fill="#52b96d" stroke="#1e1e1e" stroke-width="0.45"/><path d="M481.00,231.00 L500.20,227.61 A19.5,19.5 0 0 1 461.93,235.05 Z" fill="#d62ee0" stroke="#1e1e1e" stroke-width="0.45"/><path d="M481.00,231.00 L461.93,235.05 A19.5,19.5 0 0 1 465.03,219.82 Z" fill="#d8110f" stroke="#1e1e1e" stroke-width="0.45"/><path d="M481.00,231.00 L465.03,219.82 A19.5,19.5 0 0 1 481.00,211.50 Z" fill="#0e2a85" stroke="#1e1e1e" stroke-width="0.45"/><circle cx="481" cy="231" r="19.5" fill="none" stroke="#2e1f33" stroke-width="1"/><path d="M473.50,264.00 L473.50,243.70 A20.3,20.3 0 0 1 493.77,265.06 Z" fill="#52b96d" stroke="#1e1e1e" stroke-width="0.45"/><path d="M473.50,264.00 L493.77,265.06 A20.3,20.3 0 1 1 454.42,257.06 Z" fill="#d62ee0" stroke="#1e1e1e" stroke-width="0.45"/><path d="M473.50,264.00 L454.42,257.06 A20.3,20.3 0 0 1 463.35,246.42 Z" fill="#d8110f" stroke="#1e1e1e" stroke-width="0.45"/><path d="M473.50,264.00 L463.35,246.42 A20.3,20.3 0 0 1 471.73,243.78 Z" fill="#0e2a85" stroke="#1e1e1e" stroke-width="0.45"/><path d="M473.50,264.00 L471.73,243.78 A20.3,20.3 0 0 1 472.79,243.71 Z" fill="#ecec1a" stroke="#1e1e1e" stroke-width="0.45"/><path d="M473.50,264.00 L472.79,243.71 A20.3,20.3 0 0 1 473.50,243.70 Z" fill="#4a0414" stroke="#1e1e1e" stroke-width="0.45"/><circle cx="473.5" cy="264" r="20.3" fill="none" stroke="#2e1f33" stroke-width="1"/><path d="M563.00,200.00 L563.00,179.80 A20.2,20.2 0 0 1 576.25,184.75 Z" fill="#52b96d" stroke="#1e1e1e" stroke-width="0.45"/><path d="M563.00,200.00 L576.25,184.75 A20.2,20.2 0 1 1 542.81,200.70 Z" fill="#d62ee0" stroke="#1e1e1e" stroke-width="0.45"/><path d="M563.00,200.00 L542.81,200.70 A20.2,20.2 0 0 1 546.25,188.70 Z" fill="#d8110f" stroke="#1e1e1e" stroke-width="0.45"/><path d="M563.00,200.00 L546.25,188.70 A20.2,20.2 0 0 1 563.00,179.80 Z" fill="#0e2a85" stroke="#1e1e1e" stroke-width="0.45"/><circle cx="563" cy="200" r="20.2" fill="none" stroke="#2e1f33" stroke-width="1"/><path d="M639.60,206.40 L639.60,186.20 A20.2,20.2 0 0 1 657.27,196.61 Z" fill="#52b96d" stroke="#1e1e1e" stroke-width="0.45"/><path d="M639.60,206.40 L657.27,196.61 A20.2,20.2 0 1 1 620.39,212.64 Z" fill="#d62ee0" stroke="#1e1e1e" stroke-width="0.45"/><path d="M639.60,206.40 L620.39,212.64 A20.2,20.2 0 0 1 619.71,202.89 Z" fill="#d8110f" stroke="#1e1e1e" stroke-width="0.45"/><path d="M639.60,206.40 L619.71,202.89 A20.2,20.2 0 0 1 636.79,186.40 Z" fill="#0e2a85" stroke="#1e1e1e" stroke-width="0.45"/><path d="M639.60,206.40 L636.79,186.40 A20.2,20.2 0 0 1 638.54,186.23 Z" fill="#ecec1a" stroke="#1e1e1e" stroke-width="0.45"/><path d="M639.60,206.40 L638.54,186.23 A20.2,20.2 0 0 1 639.60,186.20 Z" fill="#4a0414" stroke="#1e1e1e" stroke-width="0.45"/><circle cx="639.6" cy="206.4" r="20.2" fill="none" stroke="#2e1f33" stroke-width="1"/><path d="M672.10,212.70 L672.10,192.50 A20.2,20.2 0 0 1 691.52,207.13 Z" fill="#52b96d" stroke="#1e1e1e" stroke-width="0.45"/><path d="M672.10,212.70 L691.52,207.13 A20.2,20.2 0 0 1 655.76,224.57 Z" fill="#d62ee0" stroke="#1e1e1e" stroke-width="0.45"/><path d="M672.10,212.70 L655.76,224.57 A20.2,20.2 0 0 1 651.98,214.46 Z" fill="#d8110f" stroke="#1e1e1e" stroke-width="0.45"/><path d="M672.10,212.70 L651.98,214.46 A20.2,20.2 0 0 1 668.59,192.81 Z" fill="#0e2a85" stroke="#1e1e1e" stroke-width="0.45"/><path d="M672.10,212.70 L668.59,192.81 A20.2,20.2 0 0 1 670.34,192.58 Z" fill="#ecec1a" stroke="#1e1e1e" stroke-width="0.45"/><path d="M672.10,212.70 L670.34,192.58 A20.2,20.2 0 0 1 672.10,192.50 Z" fill="#4a0414" stroke="#1e1e1e" stroke-width="0.45"/><circle cx="672.1" cy="212.7" r="20.2" fill="none" stroke="#2e1f33" stroke-width="1"/><path d="M735.30,289.60 L735.30,269.20 A20.4,20.4 0 0 1 755.50,286.76 Z" fill="#52b96d" stroke="#1e1e1e" stroke-width="0.45"/><path d="M735.30,289.60 L755.50,286.76 A20.4,20.4 0 1 1 719.67,276.49 Z" fill="#d62ee0" stroke="#1e1e1e" stroke-width="0.45"/><path d="M735.30,289.60 L719.67,276.49 A20.4,20.4 0 0 1 721.65,274.44 Z" fill="#d8110f" stroke="#1e1e1e" stroke-width="0.45"/><path d="M735.30,289.60 L721.65,274.44 A20.4,20.4 0 0 1 735.30,269.20 Z" fill="#0e2a85" stroke="#1e1e1e" stroke-width="0.45"/><circle cx="735.3" cy="289.6" r="20.4" fill="none" stroke="#2e1f33" stroke-width="1"/><path d="M648.60,344.10 L648.60,323.90 A20.2,20.2 0 0 1 668.43,340.25 Z" fill="#52b96d" stroke="#1e1e1e" stroke-width="0.45"/><path d="M648.60,344.10 L668.43,340.25 A20.2,20.2 0 0 1 662.63,358.63 Z" fill="#d62ee0" stroke="#1e1e1e" stroke-width="0.45"/><path d="M648.60,344.10 L662.63,358.63 A20.2,20.2 0 0 1 650.01,364.25 Z" fill="#d8110f" stroke="#1e1e1e" stroke-width="0.45"/><path d="M648.60,344.10 L650.01,364.25 A20.2,20.2 0 0 1 645.09,363.99 Z" fill="#0e2a85" stroke="#1e1e1e" stroke-width="0.45"/><path d="M648.60,344.10 L645.09,363.99 A20.2,20.2 0 0 1 643.03,363.52 Z" fill="#ecec1a" stroke="#1e1e1e" stroke-width="0.45"/><path d="M648.60,344.10 L643.03,363.52 A20.2,20.2 0 0 1 629.09,349.33 Z" fill="#c7770f" stroke="#1e1e1e" stroke-width="0.45"/><path d="M648.60,344.10 L629.09,349.33 A20.2,20.2 0 0 1 648.60,323.90 Z" fill="#4a0414" stroke="#1e1e1e" stroke-width="0.45"/><circle cx="648.6" cy="344.1" r="20.2" fill="none" stroke="#2e1f33" stroke-width="1"/><path d="M845.00,307.50 L845.00,287.30 A20.2,20.2 0 0 1 865.17,308.56 Z" fill="#52b96d" stroke="#1e1e1e" stroke-width="0.45"/><path d="M845.00,307.50 L865.17,308.56 A20.2,20.2 0 0 1 841.49,327.39 Z" fill="#d62ee0" stroke="#1e1e1e" stroke-width="0.45"/><path d="M845.00,307.50 L841.49,327.39 A20.2,20.2 0 0 1 837.76,326.36 Z" fill="#d8110f" stroke="#1e1e1e" stroke-width="0.45"/><path d="M845.00,307.50 L837.76,326.36 A20.2,20.2 0 0 1 825.58,313.07 Z" fill="#0e2a85" stroke="#1e1e1e" stroke-width="0.45"/><path d="M845.00,307.50 L825.58,313.07 A20.2,20.2 0 0 1 833.41,290.95 Z" fill="#c7770f" stroke="#1e1e1e" stroke-width="0.45"/><path d="M845.00,307.50 L833.41,290.95 A20.2,20.2 0 0 1 845.00,287.30 Z" fill="#4a0414" stroke="#1e1e1e" stroke-width="0.45"/><circle cx="845" cy="307.5" r="20.2" fill="none" stroke="#2e1f33" stroke-width="1"/><path d="M812.00,313.80 L812.00,293.40 A20.4,20.4 0 0 1 832.39,314.51 Z" fill="#52b96d" stroke="#1e1e1e" stroke-width="0.45"/><path d="M812.00,313.80 L832.39,314.51 A20.4,20.4 0 0 1 828.71,325.50 Z" fill="#d62ee0" stroke="#1e1e1e" stroke-width="0.45"/><path d="M812.00,313.80 L828.71,325.50 A20.4,20.4 0 0 1 818.98,332.97 Z" fill="#d8110f" stroke="#1e1e1e" stroke-width="0.45"/><path d="M812.00,313.80 L818.98,332.97 A20.4,20.4 0 0 1 810.93,334.17 Z" fill="#0e2a85" stroke="#1e1e1e" stroke-width="0.45"/><path d="M812.00,313.80 L810.93,334.17 A20.4,20.4 0 0 1 812.00,293.40 Z" fill="#ecec1a" stroke="#1e1e1e" stroke-width="0.45"/><circle cx="812" cy="313.8" r="20.4" fill="none" stroke="#2e1f33" stroke-width="1"/><path d="M867.30,279.30 L867.30,259.00 A20.3,20.3 0 0 1 880.08,263.52 Z" fill="#52b96d" stroke="#1e1e1e" stroke-width="0.45"/><path d="M867.30,279.30 L880.08,263.52 A20.3,20.3 0 0 1 875.56,297.84 Z" fill="#d62ee0" stroke="#1e1e1e" stroke-width="0.45"/><path d="M867.30,279.30 L875.56,297.84 A20.3,20.3 0 0 1 853.98,294.62 Z" fill="#d8110f" stroke="#1e1e1e" stroke-width="0.45"/><path d="M867.30,279.30 L853.98,294.62 A20.3,20.3 0 0 1 852.95,264.95 Z" fill="#0e2a85" stroke="#1e1e1e" stroke-width="0.45"/><path d="M867.30,279.30 L852.95,264.95 A20.3,20.3 0 0 1 867.30,259.00 Z" fill="#ecec1a" stroke="#1e1e1e" stroke-width="0.45"/><circle cx="867.3" cy="279.3" r="20.3" fill="none" stroke="#2e1f33" stroke-width="1"/><path d="M754.90,389.00 L754.90,368.60 A20.4,20.4 0 0 1 773.68,396.97 Z" fill="#52b96d" stroke="#1e1e1e" stroke-width="0.45"/><path d="M754.90,389.00 L773.68,396.97 A20.4,20.4 0 0 1 735.11,393.94 Z" fill="#d62ee0" stroke="#1e1e1e" stroke-width="0.45"/><path d="M754.90,389.00 L735.11,393.94 A20.4,20.4 0 0 1 734.70,386.16 Z" fill="#d8110f" stroke="#1e1e1e" stroke-width="0.45"/><path d="M754.90,389.00 L734.70,386.16 A20.4,20.4 0 0 1 735.02,384.41 Z" fill="#4a0414" stroke="#1e1e1e" stroke-width="0.45"/><path d="M754.90,389.00 L735.02,384.41 A20.4,20.4 0 0 1 753.83,368.63 Z" fill="#c7770f" stroke="#1e1e1e" stroke-width="0.45"/><path d="M754.90,389.00 L753.83,368.63 A20.4,20.4 0 0 1 754.90,368.60 Z" fill="#4a0414" stroke="#1e1e1e" stroke-width="0.45"/><circle cx="754.9" cy="389" r="20.4" fill="none" stroke="#2e1f33" stroke-width="1"/><path d="M752.40,442.50 L752.40,422.10 A20.4,20.4 0 0 1 771.31,434.86 Z" fill="#52b96d" stroke="#1e1e1e" stroke-width="0.45"/><path d="M752.40,442.50 L771.31,434.86 A20.4,20.4 0 0 1 745.42,461.67 Z" fill="#d62ee0" stroke="#1e1e1e" stroke-width="0.45"/><path d="M752.40,442.50 L745.42,461.67 A20.4,20.4 0 0 1 733.23,435.52 Z" fill="#d8110f" stroke="#1e1e1e" stroke-width="0.45"/><path d="M752.40,442.50 L733.23,435.52 A20.4,20.4 0 0 1 740.70,425.79 Z" fill="#0e2a85" stroke="#1e1e1e" stroke-width="0.45"/><path d="M752.40,442.50 L740.70,425.79 A20.4,20.4 0 0 1 751.69,422.11 Z" fill="#ecec1a" stroke="#1e1e1e" stroke-width="0.45"/><path d="M752.40,442.50 L751.69,422.11 A20.4,20.4 0 0 1 752.40,422.10 Z" fill="#4a0414" stroke="#1e1e1e" stroke-width="0.45"/><circle cx="752.4" cy="442.5" r="20.4" fill="none" stroke="#2e1f33" stroke-width="1"/><path d="M819.20,416.50 L819.20,396.10 A20.4,20.4 0 0 1 828.14,434.84 Z" fill="#52b96d" stroke="#1e1e1e" stroke-width="0.45"/><path d="M819.20,416.50 L828.14,434.84 A20.4,20.4 0 0 1 803.35,429.34 Z" fill="#d62ee0" stroke="#1e1e1e" stroke-width="0.45"/><path d="M819.20,416.50 L803.35,429.34 A20.4,20.4 0 0 1 800.29,408.86 Z" fill="#d8110f" stroke="#1e1e1e" stroke-width="0.45"/><path d="M819.20,416.50 L800.29,408.86 A20.4,20.4 0 0 1 812.22,397.33 Z" fill="#0e2a85" stroke="#1e1e1e" stroke-width="0.45"/><path d="M819.20,416.50 L812.22,397.33 A20.4,20.4 0 0 1 818.49,396.11 Z" fill="#ecec1a" stroke="#1e1e1e" stroke-width="0.45"/><path d="M819.20,416.50 L818.49,396.11 A20.4,20.4 0 0 1 819.20,396.10 Z" fill="#4a0414" stroke="#1e1e1e" stroke-width="0.45"/><circle cx="819.2" cy="416.5" r="20.4" fill="none" stroke="#2e1f33" stroke-width="1"/><path d="M866.40,386.20 L866.40,366.00 A20.2,20.2 0 0 1 886.60,386.20 Z" fill="#52b96d" stroke="#1e1e1e" stroke-width="0.45"/><path d="M866.40,386.20 L886.60,386.20 A20.2,20.2 0 0 1 871.97,405.62 Z" fill="#d62ee0" stroke="#1e1e1e" stroke-width="0.45"/><path d="M866.40,386.20 L871.97,405.62 A20.2,20.2 0 0 1 847.19,392.44 Z" fill="#d8110f" stroke="#1e1e1e" stroke-width="0.45"/><path d="M866.40,386.20 L847.19,392.44 A20.2,20.2 0 0 1 846.31,384.09 Z" fill="#0e2a85" stroke="#1e1e1e" stroke-width="0.45"/><path d="M866.40,386.20 L846.31,384.09 A20.2,20.2 0 0 1 862.55,366.37 Z" fill="#ecec1a" stroke="#1e1e1e" stroke-width="0.45"/><path d="M866.40,386.20 L862.55,366.37 A20.2,20.2 0 0 1 866.40,366.00 Z" fill="#4a0414" stroke="#1e1e1e" stroke-width="0.45"/><circle cx="866.4" cy="386.2" r="20.2" fill="none" stroke="#2e1f33" stroke-width="1"/><path d="M917.70,372.00 L917.70,351.60 A20.4,20.4 0 0 1 931.08,356.60 Z" fill="#52b96d" stroke="#1e1e1e" stroke-width="0.45"/><path d="M917.70,372.00 L931.08,356.60 A20.4,20.4 0 0 1 936.19,380.62 Z" fill="#d62ee0" stroke="#1e1e1e" stroke-width="0.45"/><path d="M917.70,372.00 L936.19,380.62 A20.4,20.4 0 0 1 899.36,380.94 Z" fill="#d8110f" stroke="#1e1e1e" stroke-width="0.45"/><path d="M917.70,372.00 L899.36,380.94 A20.4,20.4 0 0 1 897.30,372.00 Z" fill="#0e2a85" stroke="#1e1e1e" stroke-width="0.45"/><path d="M917.70,372.00 L897.30,372.00 A20.4,20.4 0 0 1 917.70,351.60 Z" fill="#ecec1a" stroke="#1e1e1e" stroke-width="0.45"/><circle cx="917.7" cy="372" r="20.4" fill="none" stroke="#2e1f33" stroke-width="1"/><path d="M562.20,511.70 L562.20,491.20 A20.5,20.5 0 0 1 572.45,493.95 Z" fill="#52b96d" stroke="#1e1e1e" stroke-width="0.45"/><path d="M562.20,511.70 L572.45,493.95 A20.5,20.5 0 0 1 564.70,532.05 Z" fill="#d62ee0" stroke="#1e1e1e" stroke-width="0.45"/><path d="M562.20,511.70 L564.70,532.05 A20.5,20.5 0 0 1 541.75,513.13 Z" fill="#d8110f" stroke="#1e1e1e" stroke-width="0.45"/><path d="M562.20,511.70 L541.75,513.13 A20.5,20.5 0 0 1 541.85,509.20 Z" fill="#0e2a85" stroke="#1e1e1e" stroke-width="0.45"/><path d="M562.20,511.70 L541.85,509.20 A20.5,20.5 0 0 1 553.54,493.12 Z" fill="#ecec1a" stroke="#1e1e1e" stroke-width="0.45"/><path d="M562.20,511.70 L553.54,493.12 A20.5,20.5 0 0 1 559.35,491.40 Z" fill="#c7770f" stroke="#1e1e1e" stroke-width="0.45"/><path d="M562.20,511.70 L559.35,491.40 A20.5,20.5 0 0 1 562.20,491.20 Z" fill="#4a0414" stroke="#1e1e1e" stroke-width="0.45"/><circle cx="562.2" cy="511.7" r="20.5" fill="none" stroke="#2e1f33" stroke-width="1"/><path d="M567.70,480.20 L567.70,459.80 A20.4,20.4 0 0 1 587.58,484.79 Z" fill="#52b96d" stroke="#1e1e1e" stroke-width="0.45"/><path d="M567.70,480.20 L587.58,484.79 A20.4,20.4 0 0 1 547.82,484.79 Z" fill="#d62ee0" stroke="#1e1e1e" stroke-width="0.45"/><path d="M567.70,480.20 L547.82,484.79 A20.4,20.4 0 0 1 548.53,473.22 Z" fill="#d8110f" stroke="#1e1e1e" stroke-width="0.45"/><path d="M567.70,480.20 L548.53,473.22 A20.4,20.4 0 0 1 564.86,460.00 Z" fill="#0e2a85" stroke="#1e1e1e" stroke-width="0.45"/><path d="M567.70,480.20 L564.86,460.00 A20.4,20.4 0 0 1 566.63,459.83 Z" fill="#ecec1a" stroke="#1e1e1e" stroke-width="0.45"/><path d="M567.70,480.20 L566.63,459.83 A20.4,20.4 0 0 1 567.70,459.80 Z" fill="#4a0414" stroke="#1e1e1e" stroke-width="0.45"/><circle cx="567.7" cy="480.2" r="20.4" fill="none" stroke="#2e1f33" stroke-width="1"/><path d="M641.40,490.60 L641.40,470.30 A20.3,20.3 0 0 1 659.49,499.82 Z" fill="#52b96d" stroke="#1e1e1e" stroke-width="0.45"/><path d="M641.40,490.60 L659.49,499.82 A20.3,20.3 0 0 1 623.82,500.75 Z" fill="#d62ee0" stroke="#1e1e1e" stroke-width="0.45"/><path d="M641.40,490.60 L623.82,500.75 A20.3,20.3 0 0 1 621.10,490.60 Z" fill="#d8110f" stroke="#1e1e1e" stroke-width="0.45"/><path d="M641.40,490.60 L621.10,490.60 A20.3,20.3 0 0 1 637.87,470.61 Z" fill="#0e2a85" stroke="#1e1e1e" stroke-width="0.45"/><path d="M641.40,490.60 L637.87,470.61 A20.3,20.3 0 0 1 640.34,470.33 Z" fill="#ecec1a" stroke="#1e1e1e" stroke-width="0.45"/><path d="M641.40,490.60 L640.34,470.33 A20.3,20.3 0 0 1 641.40,470.30 Z" fill="#4a0414" stroke="#1e1e1e" stroke-width="0.45"/><circle cx="641.4" cy="490.6" r="20.3" fill="none" stroke="#2e1f33" stroke-width="1"/><path d="M616.30,512.70 L616.30,492.40 A20.3,20.3 0 0 1 636.60,512.70 Z" fill="#52b96d" stroke="#1e1e1e" stroke-width="0.45"/><path d="M616.30,512.70 L636.60,512.70 A20.3,20.3 0 0 1 616.30,533.00 Z" fill="#d62ee0" stroke="#1e1e1e" stroke-width="0.45"/><path d="M616.30,512.70 L616.30,533.00 A20.3,20.3 0 0 1 596.15,515.17 Z" fill="#d8110f" stroke="#1e1e1e" stroke-width="0.45"/><path d="M616.30,512.70 L596.15,515.17 A20.3,20.3 0 0 1 597.90,504.12 Z" fill="#0e2a85" stroke="#1e1e1e" stroke-width="0.45"/><path d="M616.30,512.70 L597.90,504.12 A20.3,20.3 0 0 1 599.67,501.06 Z" fill="#ecec1a" stroke="#1e1e1e" stroke-width="0.45"/><path d="M616.30,512.70 L599.67,501.06 A20.3,20.3 0 0 1 614.53,492.48 Z" fill="#c7770f" stroke="#1e1e1e" stroke-width="0.45"/><path d="M616.30,512.70 L614.53,492.48 A20.3,20.3 0 0 1 616.30,492.40 Z" fill="#4a0414" stroke="#1e1e1e" stroke-width="0.45"/><circle cx="616.3" cy="512.7" r="20.3" fill="none" stroke="#2e1f33" stroke-width="1"/><path d="M690.20,505.00 L690.20,484.60 A20.4,20.4 0 0 1 710.52,503.22 Z" fill="#52b96d" stroke="#1e1e1e" stroke-width="0.45"/><path d="M690.20,505.00 L710.52,503.22 A20.4,20.4 0 0 1 675.04,518.65 Z" fill="#d62ee0" stroke="#1e1e1e" stroke-width="0.45"/><path d="M690.20,505.00 L675.04,518.65 A20.4,20.4 0 0 1 670.50,499.72 Z" fill="#d8110f" stroke="#1e1e1e" stroke-width="0.45"/><path d="M690.20,505.00 L670.50,499.72 A20.4,20.4 0 0 1 671.29,497.36 Z" fill="#0e2a85" stroke="#1e1e1e" stroke-width="0.45"/><path d="M690.20,505.00 L671.29,497.36 A20.4,20.4 0 0 1 690.20,484.60 Z" fill="#ecec1a" stroke="#1e1e1e" stroke-width="0.45"/><circle cx="690.2" cy="505" r="20.4" fill="none" stroke="#2e1f33" stroke-width="1"/><text x="482" y="216.2" text-anchor="middle" font-family="Liberation Sans" font-weight="bold" font-size="9.8" fill="#000" stroke="#000" stroke-width="0.7">LCG</text><text x="481" y="234.7" text-anchor="middle" font-family="Liberation Sans" font-weight="bold" font-size="9.8" fill="#000" stroke="#000" stroke-width="0.7">SCQ</text><text x="473.5" y="267.7" text-anchor="middle" font-family="Liberation Sans" font-weight="bold" font-size="9.8" fill="#000" stroke="#000" stroke-width="0.7">VGO</text><text x="563" y="203.7" text-anchor="middle" font-family="Liberation Sans" font-weight="bold" font-size="9.8" fill="#000" stroke="#000" stroke-width="0.7">OVD</text><text x="639.6" y="210.1" text-anchor="middle" font-family="Liberation Sans" font-weight="bold" font-size="9.8" fill="#000" stroke="#000" stroke-width="0.7">SDR</text><text x="672.1" y="216.39999999999998" text-anchor="middle" font-family="Liberation Sans" font-weight="bold" font-size="9.8" fill="#000" stroke="#000" stroke-width="0.7">BIO</text><text x="735.3" y="293.3" text-anchor="middle" font-family="Liberation Sans" font-weight="bold" font-size="9.8" fill="#000" stroke="#000" stroke-width="0.7">ZAZ</text><text x="648.6" y="347.8" text-anchor="middle" font-family="Liberation Sans" font-weight="bold" font-size="9.8" fill="#000" stroke="#000" stroke-width="0.7">MAD</text><text x="845" y="311.2" text-anchor="middle" font-family="Liberation Sans" font-weight="bold" font-size="9.8" fill="#000" stroke="#000" stroke-width="0.7">BCN</text><text x="812" y="317.5" text-anchor="middle" font-family="Liberation Sans" font-weight="bold" font-size="9.8" fill="#000" stroke="#000" stroke-width="0.7">REU</text><text x="867.3" y="283.0" text-anchor="middle" font-family="Liberation Sans" font-weight="bold" font-size="9.8" fill="#000" stroke="#000" stroke-width="0.7">GRO</text><text x="754.9" y="392.7" text-anchor="middle" font-family="Liberation Sans" font-weight="bold" font-size="9.8" fill="#000" stroke="#000" stroke-width="0.7">VLC</text><text x="752.4" y="446.2" text-anchor="middle" font-family="Liberation Sans" font-weight="bold" font-size="9.8" fill="#000" stroke="#000" stroke-width="0.7">ALC</text><text x="819.2" y="420.2" text-anchor="middle" font-family="Liberation Sans" font-weight="bold" font-size="9.8" fill="#000" stroke="#000" stroke-width="0.7">IBZ</text><text x="866.4" y="389.9" text-anchor="middle" font-family="Liberation Sans" font-weight="bold" font-size="9.8" fill="#000" stroke="#000" stroke-width="0.7">PMI</text><text x="917.7" y="375.7" text-anchor="middle" font-family="Liberation Sans" font-weight="bold" font-size="9.8" fill="#000" stroke="#000" stroke-width="0.7">MAH</text><text x="562.2" y="515.4" text-anchor="middle" font-family="Liberation Sans" font-weight="bold" font-size="9.8" fill="#000" stroke="#000" stroke-width="0.7">XRY</text><text x="567.7" y="483.9" text-anchor="middle" font-family="Liberation Sans" font-weight="bold" font-size="9.8" fill="#000" stroke="#000" stroke-width="0.7">SVQ</text><text x="641.4" y="494.3" text-anchor="middle" font-family="Liberation Sans" font-weight="bold" font-size="9.8" fill="#000" stroke="#000" stroke-width="0.7">GRX</text><text x="616.3" y="516.4000000000001" text-anchor="middle" font-family="Liberation Sans" font-weight="bold" font-size="9.8" fill="#000" stroke="#000" stroke-width="0.7">AGP</text><text x="690.2" y="508.7" text-anchor="middle" font-family="Liberation Sans" font-weight="bold" font-size="9.8" fill="#000" stroke="#000" stroke-width="0.7">LEI</text><circle cx="639.6" cy="206.4" r="4" fill="#000" stroke="#18c8d8" stroke-width="1.5"/></svg></div><div class="abs" style="left:276px;top:35px;width:24px;height:46px;background:#000;border-radius:3px"></div><svg class="abs" style="left:276px;top:35px" width="24" height="46" viewBox="0 0 24 46"><path d="M12 6 V17 M6.5 11.5 H17.5" stroke="#fff" stroke-width="2"/><path d="M7 35.5 H17" stroke="#555" stroke-width="1.3"/></svg><div class="abs" style="left:276px;top:88px;width:24px;height:24px;background:#000;border-radius:3px"></div><svg class="abs" style="left:276px;top:88px" width="24" height="24" viewBox="0 0 24 24"><path d="M12 5 L19.5 12 L17.5 12 L17.5 19 L14 19 L14 14.5 L10 14.5 L10 19 L6.5 19 L6.5 12 L4.5 12 Z" fill="#fff"/><rect x="15.5" y="6" width="2" height="4" fill="#fff"/></svg><div class="abs" style="left:276px;top:115px;width:24px;height:24px;background:#000;border-radius:3px"></div><svg class="abs" style="left:276px;top:115px" width="24" height="24" viewBox="0 0 24 24"><circle cx="12" cy="12" r="7" stroke="#fff" stroke-width="1.2" fill="none"/><path d="M12 4 V7 M12 17 V20 M4 12 H7 M17 12 H20" stroke="#fff" stroke-width="1.2"/></svg><div class="abs" style="left:312px;top:35px;width:209px;height:25px;background:#fff;border:1px solid #555;border-radius:3px"></div><div class="abs" style="left:338px;top:36px;width:1px;height:23px;background:#666"></div><div class="abs" style="left:494.5px;top:36px;width:1px;height:23px;background:#888"></div><div class="abs" style="left:319px;top:45px;width:0;height:0;border-left:6px solid transparent;border-right:6px solid transparent;border-top:6px solid #111"></div><div class="t" style="left:347.5px;top:40px;font-size:10.5px;color:#333">santande</div><svg class="abs" style="left:478px;top:40px" width="40" height="16" viewBox="0 0 40 16"><path d="M3 3 L12 12 M12 3 L3 12" stroke="#111" stroke-width="1.7"/><circle cx="28.5" cy="6.5" r="4" stroke="#111" stroke-width="1.7" fill="none"/><path d="M31.5 9.5 L35 13" stroke="#111" stroke-width="2"/></svg><div class="abs" style="left:270px;top:367px;width:16px;height:44px;background:#fff;border-radius:0 3px 3px 0"></div><svg class="abs" style="left:270px;top:367px" width="16" height="44" viewBox="0 0 16 44"><path d="M10 17 L6 22 L10 27" stroke="#777" stroke-width="1.3" fill="none"/></svg><svg class="abs" style="left:272px;top:664px" width="130" height="27" viewBox="272 664 130 27"><path d="M276.5 679 V682.5 H349.5 V679" stroke="#222" stroke-width="1.6" fill="none"/><text x="358" y="678" text-anchor="middle" font-family="Liberation Sans" font-size="9.5" fill="#222">200km</text><rect x="276" y="686" width="112" height="6" fill="#111"/></svg><div class="abs" style="left:840px;top:689px;width:40px;height:2px;background:#8a8a8a"></div><div class="abs" style="left:270px;top:31px;width:2px;height:660px;background:linear-gradient(90deg,rgba(0,0,0,0.25),rgba(0,0,0,0))"></div><div class="abs" style="left:1172px;top:31px;width:272px;height:3px;background:#b9c3ca"></div><div class="abs" style="left:1171px;top:34px;width:1px;height:657px;background:#8f9ba2"></div><div id="leg" style="border-left:none">
<div class="abs" style="left:0;top:0;width:272px;height:27px;background:#01020b"></div>
<div class="t" style="left:8.5px;top:6.5px;font-size:12px;line-height:14px;color:#d4e8ff;">Leyenda</div>
<svg class="abs" style="left:227px;top:9px" width="40" height="11" viewBox="0 0 40 11"><path d="M1.5 5.5 L6.2 1.5 L11 5.5 M1.5 9.5 L6.2 5.5 L11 9.5" stroke="#cfe6ff" stroke-width="1.3" fill="none"/><path d="M29 1.5 L36 8.5 M36 1.5 L29 8.5" stroke="#e8f4ff" stroke-width="1.6"/></svg>
<div class="t" style="left:12.5px;top:39.5px;font-size:10px;line-height:12px;color:#111;font-weight:bold">3- USO DE LA RED</div>
<div class="t" style="left:13px;top:59.5px;font-size:9.5px;line-height:11.5px;color:#222;">Aeropuertos</div>
<div class="t" style="left:24px;top:76.5px;font-size:9.5px;line-height:11.5px;color:#222;">Modo de acceso</div>
<div class="abs" style="left:28.5px;top:89.00px;width:15.5px;height:14.5px;background:#52b96d"></div>
<div class="t" style="left:51px;top:92.0px;font-size:9.6px;line-height:11.6px;color:#222;">Taxi</div>
<div class="abs" style="left:28.5px;top:106.55px;width:15.5px;height:14.5px;background:#d62ee0"></div>
<div class="t" style="left:51px;top:109.55000000000001px;font-size:9.6px;line-height:11.6px;color:#222;">Coche privado</div>
<div class="abs" style="left:28.5px;top:124.10px;width:15.5px;height:14.5px;background:#d8110f"></div>
<div class="t" style="left:51px;top:127.1px;font-size:9.6px;line-height:11.6px;color:#222;">Coche alquiler</div>
<div class="abs" style="left:28.5px;top:141.65px;width:15.5px;height:14.5px;background:#0e2a85"></div>
<div class="t" style="left:51px;top:144.65px;font-size:9.6px;line-height:11.6px;color:#222;">Autobus publico</div>
<div class="abs" style="left:28.5px;top:159.20px;width:15.5px;height:14.5px;background:#ecec1a"></div>
<div class="t" style="left:51px;top:162.2px;font-size:9.6px;line-height:11.6px;color:#222;">Autobus cortesia</div>
<div class="abs" style="left:28.5px;top:176.75px;width:15.5px;height:14.5px;background:#c7770f"></div>
<div class="t" style="left:51px;top:179.75px;font-size:9.6px;line-height:11.6px;color:#222;">Metro Cercanias</div>
<div class="abs" style="left:28.5px;top:194.30px;width:15.5px;height:14.5px;background:#4a0414"></div>
<div class="t" style="left:51px;top:197.3px;font-size:9.6px;line-height:11.6px;color:#222;">Conexion</div>
</div></body></html>
